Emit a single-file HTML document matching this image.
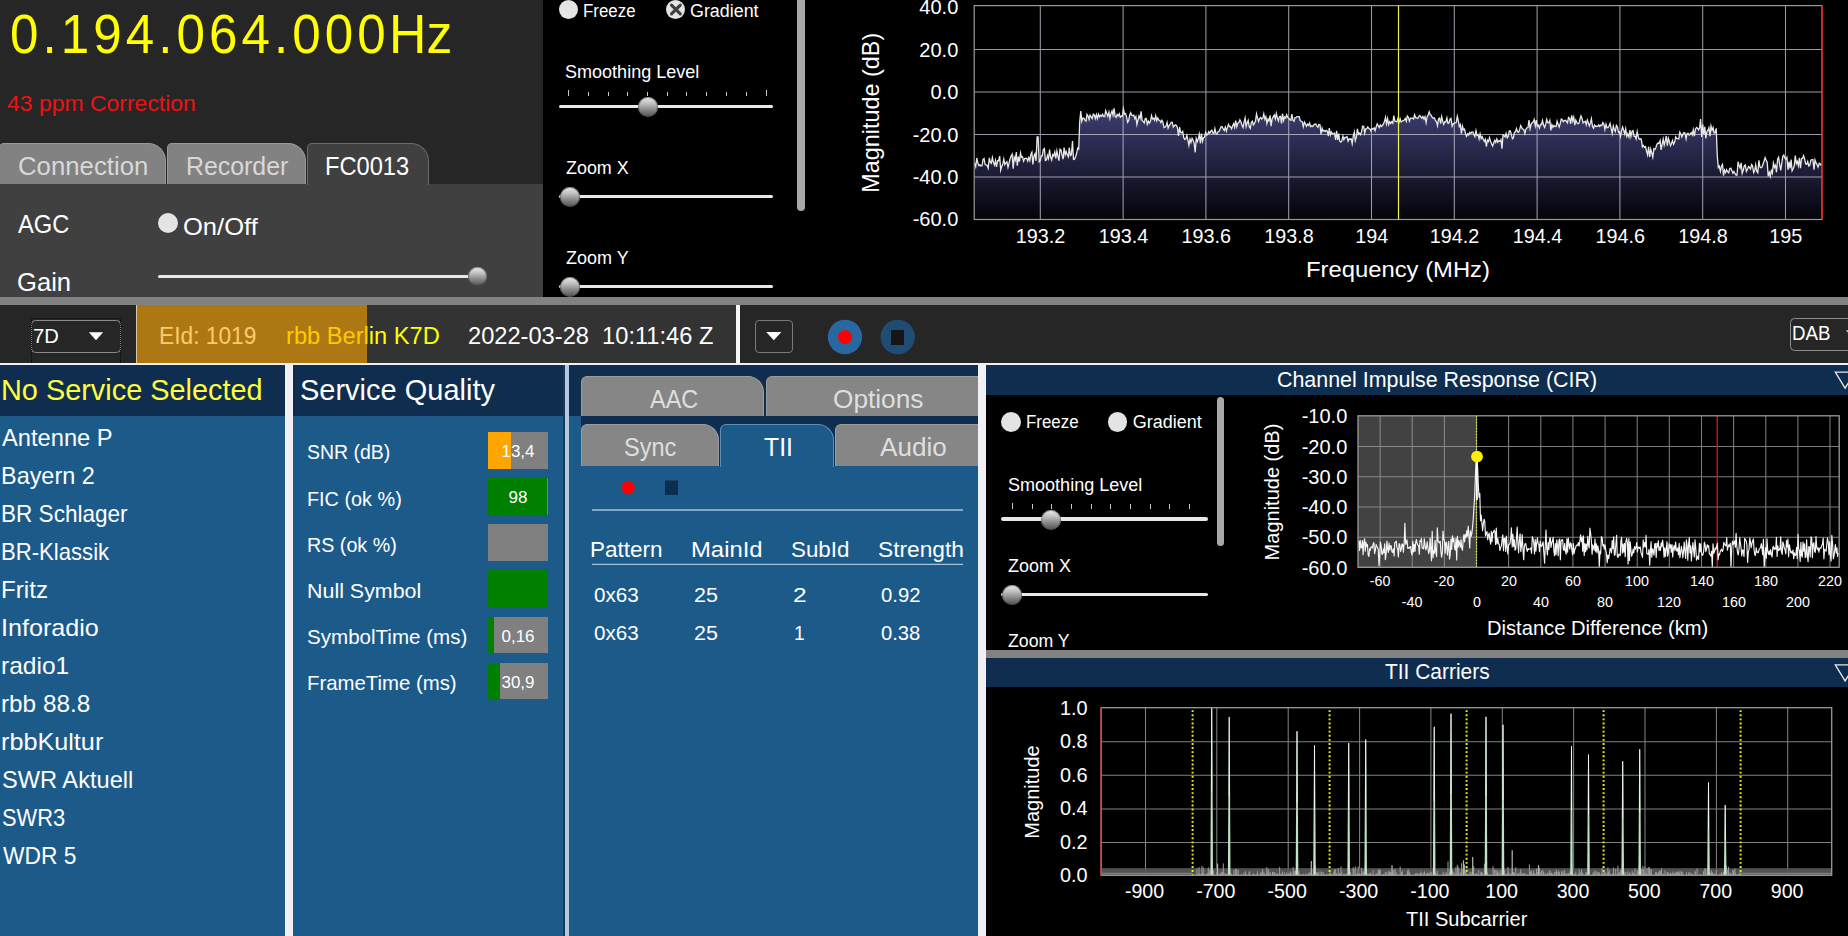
<!DOCTYPE html>
<html><head><meta charset="utf-8"><title>DAB</title><style>
html,body{margin:0;padding:0;}
body{width:1848px;height:936px;overflow:hidden;background:#000;position:relative;
 font-family:"Liberation Sans",sans-serif;color:#fff;}
div,span{position:absolute;box-sizing:border-box;white-space:nowrap;}
.t{line-height:1;transform-origin:0 0;}
svg{position:absolute;left:0;top:0;overflow:visible;}
.thumb{border-radius:50%;background:linear-gradient(to bottom,#ececec 0%,#c4c4c4 30%,#8c8c8c 62%,#4e4e4e 100%);box-shadow:inset 0 0 0 1px rgba(70,70,70,0.55);}
.radio{border-radius:50%;background:#e4e4e4;}
.track{background:#e8e8e8;border-radius:2px;}
.tab{background:#828282;color:#dcdcdc;border:1px solid #9a9a9a;border-bottom:none;border-radius:5px 18px 0 0;}
</style></head><body>
<div style="left:0px;top:0px;width:543px;height:297px;background:#262626;"></div>
<div class="t f1" style="left:9.8px;top:7.45px;font-size:55px;color:#ffff00;transform:scaleX(0.93);letter-spacing:4.35px;">0.194.064.000</div>
<div class="t" style="left:389.46px;top:7.24px;font-size:55px;color:#ffff00;transform:scaleX(0.9414);">Hz</div>
<div class="t" style="left:7.49px;top:93.05px;font-size:22.5px;color:#ee1111;transform:scaleX(1.0205);">43 ppm Correction</div>
<div style="left:0px;top:184px;width:543px;height:113px;background:#404040;"></div>
<div class="tab" style="left:-1px;top:143px;width:167px;height:41px;"></div>
<div class="tab" style="left:167px;top:143px;width:139px;height:41px;"></div>
<div class="tab" style="left:307px;top:143px;width:122px;height:42px;background:#404040;border-color:#6a6a6a;"></div>
<div class="t" style="left:18.21px;top:154.14px;font-size:25px;color:#d8d8d8;transform:scaleX(1.0303);">Connection</div>
<div class="t" style="left:185.51px;top:154.14px;font-size:25px;color:#d8d8d8;transform:scaleX(0.9950);">Recorder</div>
<div class="t" style="left:325.11px;top:154.14px;font-size:25px;color:#ffffff;transform:scaleX(0.9467);">FC0013</div>
<div class="t" style="left:17.50px;top:211.81px;font-size:25.5px;color:#fff;transform:scaleX(0.9287);">AGC</div>
<div class="radio" style="left:158px;top:213px;width:20px;height:20px;"></div>
<div class="t" style="left:183.10px;top:214.58px;font-size:24px;color:#fff;transform:scaleX(1.0643);">On/Off</div>
<div class="t" style="left:17.05px;top:269.61px;font-size:25.5px;color:#fff;transform:scaleX(1.0039);">Gain</div>
<div class="track" style="left:158px;top:275px;width:318px;height:3px;"></div>
<div class="thumb" style="left:468px;top:267px;width:19px;height:19px;"></div>
<div class="radio" style="left:559px;top:-0.2px;width:19px;height:19px;"></div>
<div class="t" style="left:583.21px;top:1.96px;font-size:18px;color:#fff;transform:scaleX(0.9374);">Freeze</div>
<div class="radio" style="left:666px;top:-0.2px;width:19px;height:19px;"></div>
<svg width="1848" height="936"><path d="M671.5 5.1 L680.3 13.9 M680.3 5.1 L671.5 13.9" stroke="#404040" stroke-width="3.1" stroke-linecap="round" fill="none"/></svg>
<div class="t" style="left:690.33px;top:1.96px;font-size:18px;color:#fff;transform:scaleX(0.9926);">Gradient</div>
<div class="t" style="left:565.45px;top:62.96px;font-size:18px;color:#fff;transform:scaleX(1.0019);">Smoothing Level</div>
<div style="left:568px;top:90px;width:1px;height:6px;background:#c8c8c8;"></div>
<div style="left:588px;top:92px;width:1px;height:4px;background:#c8c8c8;"></div>
<div style="left:608px;top:92px;width:1px;height:4px;background:#c8c8c8;"></div>
<div style="left:627px;top:92px;width:1px;height:4px;background:#c8c8c8;"></div>
<div style="left:647px;top:92px;width:1px;height:4px;background:#c8c8c8;"></div>
<div style="left:667px;top:92px;width:1px;height:4px;background:#c8c8c8;"></div>
<div style="left:686px;top:92px;width:1px;height:4px;background:#c8c8c8;"></div>
<div style="left:706px;top:92px;width:1px;height:4px;background:#c8c8c8;"></div>
<div style="left:726px;top:92px;width:1px;height:4px;background:#c8c8c8;"></div>
<div style="left:746px;top:92px;width:1px;height:4px;background:#c8c8c8;"></div>
<div style="left:766px;top:90px;width:1px;height:6px;background:#c8c8c8;"></div>
<div class="track" style="left:559px;top:105.3px;width:214px;height:3.2px;"></div>
<div class="thumb" style="left:637.5px;top:96.7px;width:20px;height:20.3px;"></div>
<div class="t" style="left:565.70px;top:158.66px;font-size:18px;color:#fff;transform:scaleX(0.9948);">Zoom X</div>
<div class="track" style="left:559px;top:195.3px;width:214px;height:3.2px;"></div>
<div class="thumb" style="left:559.6px;top:187px;width:20px;height:20px;"></div>
<div class="t" style="left:565.70px;top:248.66px;font-size:18px;color:#fff;transform:scaleX(0.9988);">Zoom Y</div>
<div class="track" style="left:559px;top:285.3px;width:214px;height:3.2px;"></div>
<div class="thumb" style="left:559.6px;top:277px;width:20px;height:20px;"></div>
<div style="left:797px;top:0px;width:7.5px;height:211px;background:#a8a8a8;border-radius:0 0 4px 4px;"></div>
<svg width="1848" height="936"><defs><linearGradient id="sg" x1="0" y1="100" x2="0" y2="219.5" gradientUnits="userSpaceOnUse"><stop offset="0" stop-color="#42427a"/><stop offset="1" stop-color="#04040a"/></linearGradient></defs><path d="M974.7 163.3 L975.7 166.6 L976.8 158.0 L977.8 163.1 L978.9 165.7 L979.9 164.7 L980.9 166.0 L982.0 165.8 L983.0 159.6 L984.1 158.5 L985.1 164.6 L986.1 164.9 L987.2 165.5 L988.2 168.2 L989.3 157.8 L990.3 162.2 L991.3 163.4 L992.4 157.6 L993.4 162.4 L994.5 165.0 L995.5 160.5 L996.5 166.9 L997.6 160.6 L998.6 160.7 L999.7 156.1 L1000.7 170.1 L1001.7 166.4 L1002.8 164.0 L1003.8 159.0 L1004.9 164.6 L1005.9 162.8 L1006.9 161.7 L1008.0 167.3 L1009.0 163.5 L1010.1 158.5 L1011.1 156.1 L1012.1 154.3 L1013.2 168.8 L1014.2 157.0 L1015.3 160.1 L1016.3 152.0 L1017.3 165.6 L1018.4 156.7 L1019.4 161.6 L1020.5 152.9 L1021.5 157.2 L1022.5 156.9 L1023.6 161.2 L1024.6 158.6 L1025.7 158.3 L1026.7 158.2 L1027.7 161.0 L1028.8 157.5 L1029.8 160.5 L1030.9 154.2 L1031.9 152.2 L1032.9 164.4 L1034.0 156.0 L1035.0 153.8 L1036.1 160.8 L1037.1 137.0 L1038.1 137.0 L1039.2 161.9 L1040.2 160.7 L1041.3 155.9 L1042.3 155.9 L1043.3 149.6 L1044.4 148.6 L1045.4 160.5 L1046.5 159.9 L1047.5 155.5 L1048.5 158.6 L1049.6 149.5 L1050.6 157.0 L1051.7 160.0 L1052.7 154.6 L1053.7 156.0 L1054.8 152.0 L1055.8 158.5 L1056.9 151.0 L1057.9 156.2 L1058.9 160.6 L1060.0 149.2 L1061.0 149.9 L1062.1 155.2 L1063.1 159.2 L1064.1 147.5 L1065.2 154.8 L1066.2 151.6 L1067.3 154.8 L1068.3 156.7 L1069.3 147.5 L1070.4 155.7 L1071.4 154.8 L1072.5 141.0 L1073.5 159.4 L1074.5 159.1 L1075.6 156.7 L1076.6 153.3 L1077.7 148.1 L1078.7 149.1 L1079.7 121.7 L1080.8 111.1 L1081.8 121.2 L1082.9 118.1 L1083.9 118.1 L1084.9 120.2 L1086.0 121.2 L1087.0 114.4 L1088.1 116.1 L1089.1 119.5 L1090.1 115.2 L1091.2 116.9 L1092.2 118.5 L1093.3 114.2 L1094.3 115.0 L1095.3 118.5 L1096.4 114.6 L1097.4 118.6 L1098.5 114.2 L1099.5 116.8 L1100.5 115.3 L1101.6 116.3 L1102.6 114.3 L1103.7 116.7 L1104.7 116.7 L1105.7 110.7 L1106.8 113.6 L1107.8 116.3 L1108.9 112.2 L1109.9 118.4 L1110.9 113.9 L1112.0 110.9 L1113.0 115.1 L1114.1 108.3 L1115.1 116.3 L1116.1 117.5 L1117.2 114.4 L1118.2 116.0 L1119.3 113.7 L1120.3 117.1 L1121.3 116.0 L1122.4 116.4 L1123.4 108.8 L1124.5 114.1 L1125.5 113.6 L1126.5 116.4 L1127.6 122.3 L1128.6 120.8 L1129.7 114.9 L1130.7 112.7 L1131.7 115.2 L1132.8 115.6 L1133.8 115.2 L1134.9 118.7 L1135.9 116.5 L1136.9 124.4 L1138.0 120.0 L1139.0 115.8 L1140.1 118.4 L1141.1 111.3 L1142.1 120.4 L1143.2 121.5 L1144.2 123.0 L1145.3 118.6 L1146.3 118.4 L1147.3 124.3 L1148.4 121.1 L1149.4 123.1 L1150.5 121.0 L1151.5 115.5 L1152.5 119.0 L1153.6 118.3 L1154.6 120.3 L1155.7 115.7 L1156.7 120.6 L1157.7 118.0 L1158.8 120.1 L1159.8 120.3 L1160.9 122.7 L1161.9 120.3 L1162.9 122.1 L1164.0 127.7 L1165.0 127.3 L1166.1 126.0 L1167.1 122.4 L1168.1 128.2 L1169.2 125.5 L1170.2 124.2 L1171.3 122.2 L1172.3 122.4 L1173.3 127.1 L1174.4 125.8 L1175.4 124.9 L1176.5 125.5 L1177.5 128.1 L1178.5 136.0 L1179.6 127.1 L1180.6 132.4 L1181.7 132.7 L1182.7 131.4 L1183.7 137.7 L1184.8 139.4 L1185.8 139.0 L1186.9 135.3 L1187.9 140.1 L1188.9 145.3 L1190.0 139.1 L1191.0 142.3 L1192.1 138.2 L1193.1 140.2 L1194.1 143.0 L1195.2 152.5 L1196.2 138.6 L1197.3 141.5 L1198.3 138.7 L1199.3 134.2 L1200.4 143.3 L1201.4 133.6 L1202.5 141.3 L1203.5 137.8 L1204.5 137.1 L1205.6 132.4 L1206.6 135.2 L1207.7 134.3 L1208.7 131.6 L1209.7 133.2 L1210.8 131.1 L1211.8 130.1 L1212.9 133.1 L1213.9 133.3 L1214.9 128.6 L1216.0 133.9 L1217.0 134.1 L1218.1 131.5 L1219.1 131.3 L1220.1 128.9 L1221.2 126.5 L1222.2 126.7 L1223.3 129.2 L1224.3 130.5 L1225.3 127.1 L1226.4 131.1 L1227.4 127.6 L1228.5 124.4 L1229.5 126.8 L1230.5 126.5 L1231.6 128.9 L1232.6 126.1 L1233.7 123.7 L1234.7 127.4 L1235.7 120.5 L1236.8 126.7 L1237.8 123.2 L1238.9 122.6 L1239.9 119.9 L1240.9 121.7 L1242.0 125.3 L1243.0 127.5 L1244.1 122.1 L1245.1 118.0 L1246.1 126.5 L1247.2 122.7 L1248.2 120.3 L1249.3 126.9 L1250.3 128.4 L1251.3 122.5 L1252.4 121.1 L1253.4 124.9 L1254.5 123.1 L1255.5 121.0 L1256.5 113.9 L1257.6 118.4 L1258.6 121.5 L1259.7 118.3 L1260.7 117.4 L1261.7 119.0 L1262.8 118.2 L1263.8 113.9 L1264.9 119.3 L1265.9 116.7 L1266.9 123.5 L1268.0 119.1 L1269.0 120.9 L1270.1 115.3 L1271.1 126.2 L1272.1 118.9 L1273.2 116.9 L1274.2 115.0 L1275.3 118.9 L1276.3 113.5 L1277.3 117.7 L1278.4 120.9 L1279.4 116.7 L1280.5 116.3 L1281.5 123.4 L1282.5 113.7 L1283.6 120.5 L1284.6 117.0 L1285.7 118.1 L1286.7 114.7 L1287.7 117.4 L1288.8 118.3 L1289.8 119.7 L1290.9 120.2 L1291.9 114.1 L1292.9 120.2 L1294.0 121.3 L1295.0 117.5 L1296.1 117.3 L1297.1 116.7 L1298.1 116.7 L1299.2 116.7 L1300.2 120.5 L1301.3 121.3 L1302.3 121.9 L1303.3 126.8 L1304.4 122.0 L1305.4 123.8 L1306.5 126.3 L1307.5 124.2 L1308.5 125.4 L1309.6 123.1 L1310.6 126.6 L1311.7 125.8 L1312.7 126.6 L1313.7 125.1 L1314.8 124.2 L1315.8 124.0 L1316.9 126.1 L1317.9 127.2 L1318.9 124.5 L1320.0 124.8 L1321.0 134.3 L1322.1 128.1 L1323.1 131.1 L1324.1 130.4 L1325.2 131.5 L1326.2 130.4 L1327.3 131.2 L1328.3 136.1 L1329.3 128.0 L1330.4 134.9 L1331.4 132.0 L1332.5 133.8 L1333.5 133.7 L1334.5 133.2 L1335.6 139.9 L1336.6 130.8 L1337.7 139.8 L1338.7 133.6 L1339.7 141.2 L1340.8 142.1 L1341.8 140.9 L1342.9 136.2 L1343.9 139.7 L1344.9 137.4 L1346.0 137.3 L1347.0 136.6 L1348.1 141.2 L1349.1 138.9 L1350.1 139.2 L1351.2 138.8 L1352.2 143.7 L1353.3 136.0 L1354.3 132.1 L1355.3 140.5 L1356.4 136.9 L1357.4 128.8 L1358.5 134.3 L1359.5 133.1 L1360.5 134.7 L1361.6 131.6 L1362.6 126.3 L1363.7 126.4 L1364.7 133.3 L1365.7 128.9 L1366.8 128.7 L1367.8 127.0 L1368.9 128.7 L1369.9 128.8 L1370.9 131.0 L1372.0 128.6 L1373.0 129.1 L1374.1 127.8 L1375.1 130.8 L1376.1 127.1 L1377.2 123.8 L1378.2 125.7 L1379.3 127.5 L1380.3 124.9 L1381.3 126.5 L1382.4 125.6 L1383.4 123.9 L1384.5 121.6 L1385.5 117.4 L1386.5 123.9 L1387.6 118.5 L1388.6 124.6 L1389.7 121.7 L1390.7 123.4 L1391.7 121.7 L1392.8 123.3 L1393.8 115.6 L1394.9 121.2 L1395.9 121.5 L1396.9 121.9 L1398.0 118.2 L1399.0 122.5 L1400.1 118.8 L1401.1 121.9 L1402.1 121.2 L1403.2 120.7 L1404.2 120.1 L1405.3 118.4 L1406.3 121.3 L1407.3 116.0 L1408.4 117.3 L1409.4 121.1 L1410.5 118.1 L1411.5 118.1 L1412.5 118.1 L1413.6 119.0 L1414.6 114.8 L1415.7 117.7 L1416.7 117.8 L1417.7 118.3 L1418.8 116.4 L1419.8 115.4 L1420.9 117.0 L1421.9 118.3 L1422.9 116.4 L1424.0 119.0 L1425.0 116.7 L1426.1 122.8 L1427.1 116.8 L1428.1 115.0 L1429.2 111.8 L1430.2 114.8 L1431.3 115.2 L1432.3 117.5 L1433.3 118.3 L1434.4 117.8 L1435.4 120.5 L1436.5 121.7 L1437.5 125.6 L1438.5 118.8 L1439.6 118.1 L1440.6 123.7 L1441.7 116.7 L1442.7 121.2 L1443.7 124.3 L1444.8 121.7 L1445.8 121.9 L1446.9 117.9 L1447.9 123.3 L1448.9 123.1 L1450.0 119.2 L1451.0 118.5 L1452.1 126.2 L1453.1 124.0 L1454.1 123.2 L1455.2 123.0 L1456.2 122.5 L1457.3 116.3 L1458.3 120.7 L1459.3 126.5 L1460.4 124.6 L1461.4 133.6 L1462.5 126.2 L1463.5 129.8 L1464.5 129.1 L1465.6 133.7 L1466.6 136.3 L1467.7 133.8 L1468.7 135.0 L1469.7 132.4 L1470.8 133.5 L1471.8 131.9 L1472.9 132.0 L1473.9 134.6 L1474.9 136.6 L1476.0 130.6 L1477.0 135.4 L1478.1 134.6 L1479.1 138.9 L1480.1 133.8 L1481.2 138.6 L1482.2 136.7 L1483.3 139.2 L1484.3 141.4 L1485.3 139.2 L1486.4 146.6 L1487.4 140.1 L1488.5 141.6 L1489.5 137.7 L1490.5 140.9 L1491.6 143.8 L1492.6 146.0 L1493.7 143.0 L1494.7 140.3 L1495.7 142.4 L1496.8 138.9 L1497.8 142.3 L1498.9 140.6 L1499.9 141.3 L1500.9 139.5 L1502.0 148.6 L1503.0 135.0 L1504.1 135.8 L1505.1 136.9 L1506.1 133.4 L1507.2 137.7 L1508.2 136.4 L1509.3 131.0 L1510.3 131.0 L1511.3 133.9 L1512.4 138.8 L1513.4 137.9 L1514.5 132.2 L1515.5 131.8 L1516.5 128.6 L1517.6 131.9 L1518.6 132.4 L1519.7 129.4 L1520.7 125.6 L1521.7 127.6 L1522.8 129.2 L1523.8 129.4 L1524.9 133.6 L1525.9 129.2 L1526.9 127.9 L1528.0 127.5 L1529.0 120.0 L1530.1 128.7 L1531.1 124.4 L1532.1 122.7 L1533.2 122.0 L1534.2 119.4 L1535.3 125.8 L1536.3 120.0 L1537.3 126.1 L1538.4 125.1 L1539.4 128.1 L1540.5 124.4 L1541.5 124.5 L1542.5 120.6 L1543.6 125.3 L1544.6 127.5 L1545.7 124.1 L1546.7 119.4 L1547.7 122.7 L1548.8 122.8 L1549.8 120.5 L1550.9 130.4 L1551.9 124.7 L1552.9 127.3 L1554.0 125.5 L1555.0 126.3 L1556.1 126.5 L1557.1 121.2 L1558.1 124.2 L1559.2 126.9 L1560.2 123.4 L1561.3 119.0 L1562.3 119.6 L1563.3 121.6 L1564.4 120.6 L1565.4 120.3 L1566.5 121.3 L1567.5 122.8 L1568.5 117.4 L1569.6 118.3 L1570.6 123.8 L1571.7 115.3 L1572.7 120.9 L1573.7 117.3 L1574.8 125.2 L1575.8 120.1 L1576.9 122.6 L1577.9 123.8 L1578.9 123.3 L1580.0 119.0 L1581.0 115.9 L1582.1 118.6 L1583.1 123.0 L1584.1 121.9 L1585.2 121.2 L1586.2 124.7 L1587.3 120.0 L1588.3 122.7 L1589.3 125.9 L1590.4 122.9 L1591.4 118.7 L1592.5 126.5 L1593.5 128.2 L1594.5 125.1 L1595.6 126.5 L1596.6 126.2 L1597.7 126.3 L1598.7 124.9 L1599.7 126.4 L1600.8 125.0 L1601.8 125.5 L1602.9 122.5 L1603.9 124.2 L1604.9 129.4 L1606.0 124.2 L1607.0 127.7 L1608.1 127.4 L1609.1 125.8 L1610.1 123.4 L1611.2 128.6 L1612.2 133.4 L1613.3 126.1 L1614.3 129.5 L1615.3 131.5 L1616.4 125.3 L1617.4 126.7 L1618.5 132.4 L1619.5 131.9 L1620.5 136.5 L1621.6 130.4 L1622.6 127.0 L1623.7 130.4 L1624.7 134.0 L1625.7 128.9 L1626.8 136.3 L1627.8 133.9 L1628.9 137.1 L1629.9 130.2 L1630.9 136.5 L1632.0 131.4 L1633.0 130.6 L1634.1 136.4 L1635.1 136.3 L1636.1 138.9 L1637.2 131.6 L1638.2 136.5 L1639.3 139.4 L1640.3 138.8 L1641.3 139.3 L1642.4 146.9 L1643.4 145.4 L1644.5 147.3 L1645.5 146.6 L1646.5 151.1 L1647.6 155.0 L1648.6 146.7 L1649.7 157.0 L1650.7 149.0 L1651.7 152.7 L1652.8 157.1 L1653.8 148.8 L1654.9 149.6 L1655.9 147.5 L1656.9 144.3 L1658.0 143.0 L1659.0 143.2 L1660.1 140.6 L1661.1 150.0 L1662.1 144.4 L1663.2 139.1 L1664.2 145.0 L1665.3 140.7 L1666.3 136.0 L1667.3 145.6 L1668.4 138.4 L1669.4 141.6 L1670.5 145.7 L1671.5 143.5 L1672.5 140.5 L1673.6 144.2 L1674.6 142.2 L1675.7 136.9 L1676.7 138.4 L1677.7 138.6 L1678.8 138.9 L1679.8 132.1 L1680.9 134.0 L1681.9 136.9 L1682.9 134.2 L1684.0 132.5 L1685.0 133.1 L1686.1 139.0 L1687.1 133.5 L1688.1 133.3 L1689.2 135.1 L1690.2 133.8 L1691.3 132.6 L1692.3 134.9 L1693.3 129.8 L1694.4 136.1 L1695.4 129.2 L1696.5 127.4 L1697.5 128.3 L1698.5 129.8 L1699.6 127.7 L1700.6 119.1 L1701.7 137.0 L1702.7 124.2 L1703.7 134.3 L1704.8 126.9 L1705.8 138.4 L1706.9 131.6 L1707.9 130.5 L1708.9 127.8 L1710.0 136.1 L1711.0 125.9 L1712.1 130.2 L1713.1 127.6 L1714.1 132.8 L1715.2 132.4 L1716.2 128.3 L1717.3 156.1 L1718.3 167.5 L1719.3 166.1 L1720.4 171.3 L1721.4 166.4 L1722.5 164.4 L1723.5 175.6 L1724.5 170.1 L1725.6 172.6 L1726.6 169.6 L1727.7 171.7 L1728.7 172.9 L1729.7 168.7 L1730.8 168.2 L1731.8 170.6 L1732.9 173.3 L1733.9 171.4 L1734.9 173.5 L1736.0 175.0 L1737.0 175.0 L1738.1 161.7 L1739.1 165.6 L1740.1 168.0 L1741.2 162.8 L1742.2 173.3 L1743.3 170.0 L1744.3 165.8 L1745.3 165.0 L1746.4 171.5 L1747.4 169.6 L1748.5 166.6 L1749.5 167.3 L1750.5 169.0 L1751.6 164.6 L1752.6 166.1 L1753.7 172.6 L1754.7 170.6 L1755.7 164.9 L1756.8 171.4 L1757.8 172.7 L1758.9 160.3 L1759.9 166.9 L1760.9 167.8 L1762.0 167.1 L1763.0 164.3 L1764.1 161.0 L1765.1 157.7 L1766.1 160.1 L1767.2 162.2 L1768.2 176.4 L1769.3 172.3 L1770.3 176.4 L1771.3 170.5 L1772.4 173.2 L1773.4 163.1 L1774.5 167.4 L1775.5 165.2 L1776.5 172.3 L1777.6 159.1 L1778.6 157.2 L1779.7 164.6 L1780.7 170.5 L1781.7 163.8 L1782.8 156.2 L1783.8 155.0 L1784.9 158.1 L1785.9 159.1 L1786.9 157.4 L1788.0 169.8 L1789.0 161.7 L1790.1 168.3 L1791.1 159.6 L1792.1 170.7 L1793.2 168.7 L1794.2 165.8 L1795.3 155.6 L1796.3 163.6 L1797.3 161.3 L1798.4 165.8 L1799.4 157.9 L1800.5 168.3 L1801.5 158.5 L1802.5 158.4 L1803.6 155.7 L1804.6 158.9 L1805.7 164.0 L1806.7 164.2 L1807.7 161.5 L1808.8 166.0 L1809.8 165.1 L1810.9 160.1 L1811.9 159.6 L1812.9 159.7 L1814.0 169.7 L1815.0 159.9 L1816.1 162.9 L1817.1 164.8 L1818.1 167.1 L1819.2 163.3 L1820.2 163.6 L1821.3 165.7 L1822 219.5 L974.2 219.5 Z" fill="url(#sg)"/><path d="M974.2 49.5 H1822 M974.2 92.0 H1822 M974.2 134.5 H1822 M974.2 177.0 H1822 M1040.3 5.6 V219.5 M1123.1 5.6 V219.5 M1205.9 5.6 V219.5 M1288.7 5.6 V219.5 M1371.5 5.6 V219.5 M1454.3 5.6 V219.5 M1537.1 5.6 V219.5 M1619.9 5.6 V219.5 M1702.7 5.6 V219.5 M1785.5 5.6 V219.5" stroke="#c4c4d6" stroke-opacity="0.78" stroke-width="1.05" fill="none"/><path d="M974.7 163.3 L975.7 166.6 L976.8 158.0 L977.8 163.1 L978.9 165.7 L979.9 164.7 L980.9 166.0 L982.0 165.8 L983.0 159.6 L984.1 158.5 L985.1 164.6 L986.1 164.9 L987.2 165.5 L988.2 168.2 L989.3 157.8 L990.3 162.2 L991.3 163.4 L992.4 157.6 L993.4 162.4 L994.5 165.0 L995.5 160.5 L996.5 166.9 L997.6 160.6 L998.6 160.7 L999.7 156.1 L1000.7 170.1 L1001.7 166.4 L1002.8 164.0 L1003.8 159.0 L1004.9 164.6 L1005.9 162.8 L1006.9 161.7 L1008.0 167.3 L1009.0 163.5 L1010.1 158.5 L1011.1 156.1 L1012.1 154.3 L1013.2 168.8 L1014.2 157.0 L1015.3 160.1 L1016.3 152.0 L1017.3 165.6 L1018.4 156.7 L1019.4 161.6 L1020.5 152.9 L1021.5 157.2 L1022.5 156.9 L1023.6 161.2 L1024.6 158.6 L1025.7 158.3 L1026.7 158.2 L1027.7 161.0 L1028.8 157.5 L1029.8 160.5 L1030.9 154.2 L1031.9 152.2 L1032.9 164.4 L1034.0 156.0 L1035.0 153.8 L1036.1 160.8 L1037.1 137.0 L1038.1 137.0 L1039.2 161.9 L1040.2 160.7 L1041.3 155.9 L1042.3 155.9 L1043.3 149.6 L1044.4 148.6 L1045.4 160.5 L1046.5 159.9 L1047.5 155.5 L1048.5 158.6 L1049.6 149.5 L1050.6 157.0 L1051.7 160.0 L1052.7 154.6 L1053.7 156.0 L1054.8 152.0 L1055.8 158.5 L1056.9 151.0 L1057.9 156.2 L1058.9 160.6 L1060.0 149.2 L1061.0 149.9 L1062.1 155.2 L1063.1 159.2 L1064.1 147.5 L1065.2 154.8 L1066.2 151.6 L1067.3 154.8 L1068.3 156.7 L1069.3 147.5 L1070.4 155.7 L1071.4 154.8 L1072.5 141.0 L1073.5 159.4 L1074.5 159.1 L1075.6 156.7 L1076.6 153.3 L1077.7 148.1 L1078.7 149.1 L1079.7 121.7 L1080.8 111.1 L1081.8 121.2 L1082.9 118.1 L1083.9 118.1 L1084.9 120.2 L1086.0 121.2 L1087.0 114.4 L1088.1 116.1 L1089.1 119.5 L1090.1 115.2 L1091.2 116.9 L1092.2 118.5 L1093.3 114.2 L1094.3 115.0 L1095.3 118.5 L1096.4 114.6 L1097.4 118.6 L1098.5 114.2 L1099.5 116.8 L1100.5 115.3 L1101.6 116.3 L1102.6 114.3 L1103.7 116.7 L1104.7 116.7 L1105.7 110.7 L1106.8 113.6 L1107.8 116.3 L1108.9 112.2 L1109.9 118.4 L1110.9 113.9 L1112.0 110.9 L1113.0 115.1 L1114.1 108.3 L1115.1 116.3 L1116.1 117.5 L1117.2 114.4 L1118.2 116.0 L1119.3 113.7 L1120.3 117.1 L1121.3 116.0 L1122.4 116.4 L1123.4 108.8 L1124.5 114.1 L1125.5 113.6 L1126.5 116.4 L1127.6 122.3 L1128.6 120.8 L1129.7 114.9 L1130.7 112.7 L1131.7 115.2 L1132.8 115.6 L1133.8 115.2 L1134.9 118.7 L1135.9 116.5 L1136.9 124.4 L1138.0 120.0 L1139.0 115.8 L1140.1 118.4 L1141.1 111.3 L1142.1 120.4 L1143.2 121.5 L1144.2 123.0 L1145.3 118.6 L1146.3 118.4 L1147.3 124.3 L1148.4 121.1 L1149.4 123.1 L1150.5 121.0 L1151.5 115.5 L1152.5 119.0 L1153.6 118.3 L1154.6 120.3 L1155.7 115.7 L1156.7 120.6 L1157.7 118.0 L1158.8 120.1 L1159.8 120.3 L1160.9 122.7 L1161.9 120.3 L1162.9 122.1 L1164.0 127.7 L1165.0 127.3 L1166.1 126.0 L1167.1 122.4 L1168.1 128.2 L1169.2 125.5 L1170.2 124.2 L1171.3 122.2 L1172.3 122.4 L1173.3 127.1 L1174.4 125.8 L1175.4 124.9 L1176.5 125.5 L1177.5 128.1 L1178.5 136.0 L1179.6 127.1 L1180.6 132.4 L1181.7 132.7 L1182.7 131.4 L1183.7 137.7 L1184.8 139.4 L1185.8 139.0 L1186.9 135.3 L1187.9 140.1 L1188.9 145.3 L1190.0 139.1 L1191.0 142.3 L1192.1 138.2 L1193.1 140.2 L1194.1 143.0 L1195.2 152.5 L1196.2 138.6 L1197.3 141.5 L1198.3 138.7 L1199.3 134.2 L1200.4 143.3 L1201.4 133.6 L1202.5 141.3 L1203.5 137.8 L1204.5 137.1 L1205.6 132.4 L1206.6 135.2 L1207.7 134.3 L1208.7 131.6 L1209.7 133.2 L1210.8 131.1 L1211.8 130.1 L1212.9 133.1 L1213.9 133.3 L1214.9 128.6 L1216.0 133.9 L1217.0 134.1 L1218.1 131.5 L1219.1 131.3 L1220.1 128.9 L1221.2 126.5 L1222.2 126.7 L1223.3 129.2 L1224.3 130.5 L1225.3 127.1 L1226.4 131.1 L1227.4 127.6 L1228.5 124.4 L1229.5 126.8 L1230.5 126.5 L1231.6 128.9 L1232.6 126.1 L1233.7 123.7 L1234.7 127.4 L1235.7 120.5 L1236.8 126.7 L1237.8 123.2 L1238.9 122.6 L1239.9 119.9 L1240.9 121.7 L1242.0 125.3 L1243.0 127.5 L1244.1 122.1 L1245.1 118.0 L1246.1 126.5 L1247.2 122.7 L1248.2 120.3 L1249.3 126.9 L1250.3 128.4 L1251.3 122.5 L1252.4 121.1 L1253.4 124.9 L1254.5 123.1 L1255.5 121.0 L1256.5 113.9 L1257.6 118.4 L1258.6 121.5 L1259.7 118.3 L1260.7 117.4 L1261.7 119.0 L1262.8 118.2 L1263.8 113.9 L1264.9 119.3 L1265.9 116.7 L1266.9 123.5 L1268.0 119.1 L1269.0 120.9 L1270.1 115.3 L1271.1 126.2 L1272.1 118.9 L1273.2 116.9 L1274.2 115.0 L1275.3 118.9 L1276.3 113.5 L1277.3 117.7 L1278.4 120.9 L1279.4 116.7 L1280.5 116.3 L1281.5 123.4 L1282.5 113.7 L1283.6 120.5 L1284.6 117.0 L1285.7 118.1 L1286.7 114.7 L1287.7 117.4 L1288.8 118.3 L1289.8 119.7 L1290.9 120.2 L1291.9 114.1 L1292.9 120.2 L1294.0 121.3 L1295.0 117.5 L1296.1 117.3 L1297.1 116.7 L1298.1 116.7 L1299.2 116.7 L1300.2 120.5 L1301.3 121.3 L1302.3 121.9 L1303.3 126.8 L1304.4 122.0 L1305.4 123.8 L1306.5 126.3 L1307.5 124.2 L1308.5 125.4 L1309.6 123.1 L1310.6 126.6 L1311.7 125.8 L1312.7 126.6 L1313.7 125.1 L1314.8 124.2 L1315.8 124.0 L1316.9 126.1 L1317.9 127.2 L1318.9 124.5 L1320.0 124.8 L1321.0 134.3 L1322.1 128.1 L1323.1 131.1 L1324.1 130.4 L1325.2 131.5 L1326.2 130.4 L1327.3 131.2 L1328.3 136.1 L1329.3 128.0 L1330.4 134.9 L1331.4 132.0 L1332.5 133.8 L1333.5 133.7 L1334.5 133.2 L1335.6 139.9 L1336.6 130.8 L1337.7 139.8 L1338.7 133.6 L1339.7 141.2 L1340.8 142.1 L1341.8 140.9 L1342.9 136.2 L1343.9 139.7 L1344.9 137.4 L1346.0 137.3 L1347.0 136.6 L1348.1 141.2 L1349.1 138.9 L1350.1 139.2 L1351.2 138.8 L1352.2 143.7 L1353.3 136.0 L1354.3 132.1 L1355.3 140.5 L1356.4 136.9 L1357.4 128.8 L1358.5 134.3 L1359.5 133.1 L1360.5 134.7 L1361.6 131.6 L1362.6 126.3 L1363.7 126.4 L1364.7 133.3 L1365.7 128.9 L1366.8 128.7 L1367.8 127.0 L1368.9 128.7 L1369.9 128.8 L1370.9 131.0 L1372.0 128.6 L1373.0 129.1 L1374.1 127.8 L1375.1 130.8 L1376.1 127.1 L1377.2 123.8 L1378.2 125.7 L1379.3 127.5 L1380.3 124.9 L1381.3 126.5 L1382.4 125.6 L1383.4 123.9 L1384.5 121.6 L1385.5 117.4 L1386.5 123.9 L1387.6 118.5 L1388.6 124.6 L1389.7 121.7 L1390.7 123.4 L1391.7 121.7 L1392.8 123.3 L1393.8 115.6 L1394.9 121.2 L1395.9 121.5 L1396.9 121.9 L1398.0 118.2 L1399.0 122.5 L1400.1 118.8 L1401.1 121.9 L1402.1 121.2 L1403.2 120.7 L1404.2 120.1 L1405.3 118.4 L1406.3 121.3 L1407.3 116.0 L1408.4 117.3 L1409.4 121.1 L1410.5 118.1 L1411.5 118.1 L1412.5 118.1 L1413.6 119.0 L1414.6 114.8 L1415.7 117.7 L1416.7 117.8 L1417.7 118.3 L1418.8 116.4 L1419.8 115.4 L1420.9 117.0 L1421.9 118.3 L1422.9 116.4 L1424.0 119.0 L1425.0 116.7 L1426.1 122.8 L1427.1 116.8 L1428.1 115.0 L1429.2 111.8 L1430.2 114.8 L1431.3 115.2 L1432.3 117.5 L1433.3 118.3 L1434.4 117.8 L1435.4 120.5 L1436.5 121.7 L1437.5 125.6 L1438.5 118.8 L1439.6 118.1 L1440.6 123.7 L1441.7 116.7 L1442.7 121.2 L1443.7 124.3 L1444.8 121.7 L1445.8 121.9 L1446.9 117.9 L1447.9 123.3 L1448.9 123.1 L1450.0 119.2 L1451.0 118.5 L1452.1 126.2 L1453.1 124.0 L1454.1 123.2 L1455.2 123.0 L1456.2 122.5 L1457.3 116.3 L1458.3 120.7 L1459.3 126.5 L1460.4 124.6 L1461.4 133.6 L1462.5 126.2 L1463.5 129.8 L1464.5 129.1 L1465.6 133.7 L1466.6 136.3 L1467.7 133.8 L1468.7 135.0 L1469.7 132.4 L1470.8 133.5 L1471.8 131.9 L1472.9 132.0 L1473.9 134.6 L1474.9 136.6 L1476.0 130.6 L1477.0 135.4 L1478.1 134.6 L1479.1 138.9 L1480.1 133.8 L1481.2 138.6 L1482.2 136.7 L1483.3 139.2 L1484.3 141.4 L1485.3 139.2 L1486.4 146.6 L1487.4 140.1 L1488.5 141.6 L1489.5 137.7 L1490.5 140.9 L1491.6 143.8 L1492.6 146.0 L1493.7 143.0 L1494.7 140.3 L1495.7 142.4 L1496.8 138.9 L1497.8 142.3 L1498.9 140.6 L1499.9 141.3 L1500.9 139.5 L1502.0 148.6 L1503.0 135.0 L1504.1 135.8 L1505.1 136.9 L1506.1 133.4 L1507.2 137.7 L1508.2 136.4 L1509.3 131.0 L1510.3 131.0 L1511.3 133.9 L1512.4 138.8 L1513.4 137.9 L1514.5 132.2 L1515.5 131.8 L1516.5 128.6 L1517.6 131.9 L1518.6 132.4 L1519.7 129.4 L1520.7 125.6 L1521.7 127.6 L1522.8 129.2 L1523.8 129.4 L1524.9 133.6 L1525.9 129.2 L1526.9 127.9 L1528.0 127.5 L1529.0 120.0 L1530.1 128.7 L1531.1 124.4 L1532.1 122.7 L1533.2 122.0 L1534.2 119.4 L1535.3 125.8 L1536.3 120.0 L1537.3 126.1 L1538.4 125.1 L1539.4 128.1 L1540.5 124.4 L1541.5 124.5 L1542.5 120.6 L1543.6 125.3 L1544.6 127.5 L1545.7 124.1 L1546.7 119.4 L1547.7 122.7 L1548.8 122.8 L1549.8 120.5 L1550.9 130.4 L1551.9 124.7 L1552.9 127.3 L1554.0 125.5 L1555.0 126.3 L1556.1 126.5 L1557.1 121.2 L1558.1 124.2 L1559.2 126.9 L1560.2 123.4 L1561.3 119.0 L1562.3 119.6 L1563.3 121.6 L1564.4 120.6 L1565.4 120.3 L1566.5 121.3 L1567.5 122.8 L1568.5 117.4 L1569.6 118.3 L1570.6 123.8 L1571.7 115.3 L1572.7 120.9 L1573.7 117.3 L1574.8 125.2 L1575.8 120.1 L1576.9 122.6 L1577.9 123.8 L1578.9 123.3 L1580.0 119.0 L1581.0 115.9 L1582.1 118.6 L1583.1 123.0 L1584.1 121.9 L1585.2 121.2 L1586.2 124.7 L1587.3 120.0 L1588.3 122.7 L1589.3 125.9 L1590.4 122.9 L1591.4 118.7 L1592.5 126.5 L1593.5 128.2 L1594.5 125.1 L1595.6 126.5 L1596.6 126.2 L1597.7 126.3 L1598.7 124.9 L1599.7 126.4 L1600.8 125.0 L1601.8 125.5 L1602.9 122.5 L1603.9 124.2 L1604.9 129.4 L1606.0 124.2 L1607.0 127.7 L1608.1 127.4 L1609.1 125.8 L1610.1 123.4 L1611.2 128.6 L1612.2 133.4 L1613.3 126.1 L1614.3 129.5 L1615.3 131.5 L1616.4 125.3 L1617.4 126.7 L1618.5 132.4 L1619.5 131.9 L1620.5 136.5 L1621.6 130.4 L1622.6 127.0 L1623.7 130.4 L1624.7 134.0 L1625.7 128.9 L1626.8 136.3 L1627.8 133.9 L1628.9 137.1 L1629.9 130.2 L1630.9 136.5 L1632.0 131.4 L1633.0 130.6 L1634.1 136.4 L1635.1 136.3 L1636.1 138.9 L1637.2 131.6 L1638.2 136.5 L1639.3 139.4 L1640.3 138.8 L1641.3 139.3 L1642.4 146.9 L1643.4 145.4 L1644.5 147.3 L1645.5 146.6 L1646.5 151.1 L1647.6 155.0 L1648.6 146.7 L1649.7 157.0 L1650.7 149.0 L1651.7 152.7 L1652.8 157.1 L1653.8 148.8 L1654.9 149.6 L1655.9 147.5 L1656.9 144.3 L1658.0 143.0 L1659.0 143.2 L1660.1 140.6 L1661.1 150.0 L1662.1 144.4 L1663.2 139.1 L1664.2 145.0 L1665.3 140.7 L1666.3 136.0 L1667.3 145.6 L1668.4 138.4 L1669.4 141.6 L1670.5 145.7 L1671.5 143.5 L1672.5 140.5 L1673.6 144.2 L1674.6 142.2 L1675.7 136.9 L1676.7 138.4 L1677.7 138.6 L1678.8 138.9 L1679.8 132.1 L1680.9 134.0 L1681.9 136.9 L1682.9 134.2 L1684.0 132.5 L1685.0 133.1 L1686.1 139.0 L1687.1 133.5 L1688.1 133.3 L1689.2 135.1 L1690.2 133.8 L1691.3 132.6 L1692.3 134.9 L1693.3 129.8 L1694.4 136.1 L1695.4 129.2 L1696.5 127.4 L1697.5 128.3 L1698.5 129.8 L1699.6 127.7 L1700.6 119.1 L1701.7 137.0 L1702.7 124.2 L1703.7 134.3 L1704.8 126.9 L1705.8 138.4 L1706.9 131.6 L1707.9 130.5 L1708.9 127.8 L1710.0 136.1 L1711.0 125.9 L1712.1 130.2 L1713.1 127.6 L1714.1 132.8 L1715.2 132.4 L1716.2 128.3 L1717.3 156.1 L1718.3 167.5 L1719.3 166.1 L1720.4 171.3 L1721.4 166.4 L1722.5 164.4 L1723.5 175.6 L1724.5 170.1 L1725.6 172.6 L1726.6 169.6 L1727.7 171.7 L1728.7 172.9 L1729.7 168.7 L1730.8 168.2 L1731.8 170.6 L1732.9 173.3 L1733.9 171.4 L1734.9 173.5 L1736.0 175.0 L1737.0 175.0 L1738.1 161.7 L1739.1 165.6 L1740.1 168.0 L1741.2 162.8 L1742.2 173.3 L1743.3 170.0 L1744.3 165.8 L1745.3 165.0 L1746.4 171.5 L1747.4 169.6 L1748.5 166.6 L1749.5 167.3 L1750.5 169.0 L1751.6 164.6 L1752.6 166.1 L1753.7 172.6 L1754.7 170.6 L1755.7 164.9 L1756.8 171.4 L1757.8 172.7 L1758.9 160.3 L1759.9 166.9 L1760.9 167.8 L1762.0 167.1 L1763.0 164.3 L1764.1 161.0 L1765.1 157.7 L1766.1 160.1 L1767.2 162.2 L1768.2 176.4 L1769.3 172.3 L1770.3 176.4 L1771.3 170.5 L1772.4 173.2 L1773.4 163.1 L1774.5 167.4 L1775.5 165.2 L1776.5 172.3 L1777.6 159.1 L1778.6 157.2 L1779.7 164.6 L1780.7 170.5 L1781.7 163.8 L1782.8 156.2 L1783.8 155.0 L1784.9 158.1 L1785.9 159.1 L1786.9 157.4 L1788.0 169.8 L1789.0 161.7 L1790.1 168.3 L1791.1 159.6 L1792.1 170.7 L1793.2 168.7 L1794.2 165.8 L1795.3 155.6 L1796.3 163.6 L1797.3 161.3 L1798.4 165.8 L1799.4 157.9 L1800.5 168.3 L1801.5 158.5 L1802.5 158.4 L1803.6 155.7 L1804.6 158.9 L1805.7 164.0 L1806.7 164.2 L1807.7 161.5 L1808.8 166.0 L1809.8 165.1 L1810.9 160.1 L1811.9 159.6 L1812.9 159.7 L1814.0 169.7 L1815.0 159.9 L1816.1 162.9 L1817.1 164.8 L1818.1 167.1 L1819.2 163.3 L1820.2 163.6 L1821.3 165.7" stroke="#e8e8e8" stroke-width="1.3" fill="none" stroke-linejoin="miter" stroke-miterlimit="6"/><rect x="974.2" y="5.6" width="847.8" height="213.9" fill="none" stroke="#9a9a9a" stroke-width="1.2"/><path d="M1398.5 5.6 V219.5" stroke="#f4f450" stroke-width="1.2"/><path d="M1822.3 5.6 V219.5" stroke="#c42828" stroke-width="1.4"/></svg>
<div class="t yl1" style="left:858.3px;width:100px;text-align:right;top:-2.7px;font-size:20px;">40.0</div>
<div class="t yl1" style="left:858.3px;width:100px;text-align:right;top:39.8px;font-size:20px;">20.0</div>
<div class="t yl1" style="left:858.3px;width:100px;text-align:right;top:82.3px;font-size:20px;">0.0</div>
<div class="t yl1" style="left:858.3px;width:100px;text-align:right;top:124.8px;font-size:20px;">-20.0</div>
<div class="t yl1" style="left:858.3px;width:100px;text-align:right;top:167.3px;font-size:20px;">-40.0</div>
<div class="t yl1" style="left:858.3px;width:100px;text-align:right;top:209.3px;font-size:20px;">-60.0</div>
<div class="t xl1" style="left:990.6px;width:100px;text-align:center;top:226.6px;font-size:19.8px;">193.2</div>
<div class="t xl1" style="left:1073.4px;width:100px;text-align:center;top:226.6px;font-size:19.8px;">193.4</div>
<div class="t xl1" style="left:1156.2px;width:100px;text-align:center;top:226.6px;font-size:19.8px;">193.6</div>
<div class="t xl1" style="left:1239.0px;width:100px;text-align:center;top:226.6px;font-size:19.8px;">193.8</div>
<div class="t xl1" style="left:1321.8px;width:100px;text-align:center;top:226.6px;font-size:19.8px;">194</div>
<div class="t xl1" style="left:1404.6px;width:100px;text-align:center;top:226.6px;font-size:19.8px;">194.2</div>
<div class="t xl1" style="left:1487.4px;width:100px;text-align:center;top:226.6px;font-size:19.8px;">194.4</div>
<div class="t xl1" style="left:1570.2px;width:100px;text-align:center;top:226.6px;font-size:19.8px;">194.6</div>
<div class="t xl1" style="left:1653.0px;width:100px;text-align:center;top:226.6px;font-size:19.8px;">194.8</div>
<div class="t xl1" style="left:1735.8px;width:100px;text-align:center;top:226.6px;font-size:19.8px;">195</div>
<div class="t" style="left:1305.95px;top:258.75px;font-size:22.5px;color:#fff;transform:scaleX(1.0585);">Frequency (MHz)</div>
<div class="t mg1" style="left:771.6px;width:200px;text-align:center;top:101.3px;font-size:23.4px;transform:rotate(-90deg);transform-origin:50% 50%;">Magnitude (dB)</div>
<div style="left:0px;top:297.3px;width:1848px;height:7.7px;background:#828282;"></div>
<div style="left:0px;top:305px;width:136px;height:58px;background:#262626;"></div>
<div style="left:136px;top:305px;width:600px;height:58px;background:#333333;"></div>
<div style="left:735.8px;top:305px;width:4.2px;height:58px;background:#f6f6f6;"></div>
<div style="left:740px;top:305px;width:1108px;height:58px;background:#262626;"></div>
<div style="left:0px;top:363px;width:1848px;height:2px;background:#f0f0f0;"></div>
<div style="left:30.8px;top:319.8px;width:90.6px;height:33.6px;border:1.2px solid #8a8a8a;border-radius:4.5px;background:#262626;"></div>
<div style="left:30.8px;top:317.8px;width:90.4px;height:45.2px;border:1.1px dotted #060606;border-bottom:none;"></div>
<div class="t" style="left:32.69px;top:325.67px;font-size:20px;color:#fff;transform:scaleX(1.0074);">7D</div>
<svg width="1848" height="936"><path d="M88.8 332.3 H103.2 L96 340.3 Z" fill="#fff"/></svg>
<div class="t" style="left:158.95px;top:325.13px;font-size:23px;color:#ffffff;transform:scaleX(0.9885);">EId: 1019</div>
<div class="t" style="left:285.66px;top:325.13px;font-size:23px;color:#ffff00;transform:scaleX(1.0284);">rbb Berlin K7D</div>
<div style="left:136.3px;top:305px;width:230.7px;height:58px;background:rgba(255,165,0,0.6);"></div>
<div style="left:136px;top:305px;width:1.2px;height:58px;background:#dcc8a8;"></div>
<div class="t" style="left:468.34px;top:325.13px;font-size:23px;color:#ffffff;transform:scaleX(1.0280);">2022-03-28&nbsp; 10:11:46 Z</div>
<div style="left:755px;top:320px;width:38px;height:33px;border:1px solid #7a7a7a;border-radius:4px;"></div>
<svg width="1848" height="936"><path d="M766.2 332 H781.4 L773.8 340.3 Z" fill="#fff"/><circle cx="845" cy="337" r="17.2" fill="#2868a0"/><circle cx="845" cy="337" r="7" fill="#ff0000"/><circle cx="897.7" cy="337" r="17.2" fill="#204c74"/><rect x="891" y="330" width="13" height="15" fill="#161616"/></svg>
<div style="left:1789.8px;top:317.8px;width:70px;height:33.4px;border:1.5px solid #8e8e8e;border-radius:4.5px;"></div>
<div class="t" style="left:1791.68px;top:323.07px;font-size:20px;color:#fff;transform:scaleX(0.9351);">DAB</div>
<svg width="1848" height="936"><path d="M1845.8 330.3 H1861 L1853.4 338.5 Z" fill="#c8c8c8"/></svg>
<div style="left:0px;top:365px;width:285.5px;height:51px;background:#0f2d4f;"></div>
<div style="left:0px;top:416px;width:285.5px;height:520px;background:#1c5a8a;"></div>
<div class="t" style="left:0.56px;top:375.40px;font-size:29.3px;color:#ffff3c;transform:scaleX(0.9854);">No Service Selected</div>
<div class="t" style="left:1.80px;top:425.68px;font-size:24px;color:#fff;transform:scaleX(0.9867);">Antenne P</div>
<div class="t" style="left:0.97px;top:463.68px;font-size:24px;color:#fff;transform:scaleX(0.9761);">Bayern 2</div>
<div class="t" style="left:1.24px;top:501.68px;font-size:24px;color:#fff;transform:scaleX(0.9396);">BR Schlager</div>
<div class="t" style="left:1.27px;top:539.68px;font-size:24px;color:#fff;transform:scaleX(0.9211);">BR-Klassik</div>
<div class="t" style="left:1.11px;top:577.68px;font-size:24px;color:#fff;transform:scaleX(1.0086);">Fritz</div>
<div class="t" style="left:0.77px;top:615.68px;font-size:24px;color:#fff;transform:scaleX(1.0471);">Inforadio</div>
<div class="t" style="left:0.97px;top:653.68px;font-size:24px;color:#fff;transform:scaleX(1.0214);">radio1</div>
<div class="t" style="left:0.98px;top:691.68px;font-size:24px;color:#fff;transform:scaleX(1.0126);">rbb 88.8</div>
<div class="t" style="left:0.92px;top:729.68px;font-size:24px;color:#fff;transform:scaleX(1.0503);">rbbKultur</div>
<div class="t" style="left:1.52px;top:767.68px;font-size:24px;color:#fff;transform:scaleX(0.9843);">SWR Aktuell</div>
<div class="t" style="left:1.59px;top:805.68px;font-size:24px;color:#fff;transform:scaleX(0.9113);">SWR3</div>
<div class="t" style="left:2.50px;top:843.68px;font-size:24px;color:#fff;transform:scaleX(0.9493);">WDR 5</div>
<div style="left:285.2px;top:365px;width:7.9px;height:571px;background:#f0f0f5;"></div>
<div style="left:293px;top:365px;width:270.5px;height:51px;background:#0f2d4f;"></div>
<div style="left:293px;top:416px;width:270.5px;height:520px;background:#1c5a8a;"></div>
<div style="left:563.4px;top:365px;width:1.4px;height:571px;background:#123a60;"></div>
<div style="left:564.7px;top:365px;width:4.6px;height:571px;background:#b6c8de;"></div>
<div class="t" style="left:300.47px;top:375.23px;font-size:29.5px;color:#fff;transform:scaleX(0.9826);">Service Quality</div>
<div class="t" style="left:307.46px;top:442.32px;font-size:20.3px;color:#fff;transform:scaleX(0.9598);">SNR (dB)</div>
<div style="left:488px;top:432.0px;width:60px;height:36.8px;background:#808080;"></div>
<div style="left:488px;top:432.0px;width:23px;height:36.8px;background:#ffa500;"></div>
<div class="t qv" style="left:488px;width:60px;text-align:center;top:443.2px;font-size:17px;">13,4</div>
<div class="t" style="left:306.71px;top:488.52px;font-size:20.3px;color:#fff;transform:scaleX(0.9776);">FIC (ok %)</div>
<div style="left:488px;top:478.1px;width:60px;height:36.8px;background:#808080;"></div>
<div style="left:488px;top:478.1px;width:59px;height:36.8px;background:#008000;"></div>
<div class="t qv" style="left:488px;width:60px;text-align:center;top:489.3px;font-size:17px;">98</div>
<div class="t" style="left:306.72px;top:534.72px;font-size:20.3px;color:#fff;transform:scaleX(0.9710);">RS (ok %)</div>
<div style="left:488px;top:524.2px;width:60px;height:36.8px;background:#808080;"></div>
<div class="t" style="left:306.58px;top:580.92px;font-size:20.3px;color:#fff;transform:scaleX(1.0561);">Null Symbol</div>
<div style="left:488px;top:570.4px;width:60px;height:36.8px;background:#808080;"></div>
<div style="left:488px;top:570.4px;width:60px;height:36.8px;background:#008000;"></div>
<div class="t" style="left:307.41px;top:627.12px;font-size:20.3px;color:#fff;transform:scaleX(1.0139);">SymbolTime (ms)</div>
<div style="left:488px;top:616.5px;width:60px;height:36.8px;background:#808080;"></div>
<div style="left:488px;top:616.5px;width:6px;height:36.8px;background:#008000;"></div>
<div class="t qv" style="left:488px;width:60px;text-align:center;top:627.7px;font-size:17px;">0,16</div>
<div class="t" style="left:306.66px;top:673.32px;font-size:20.3px;color:#fff;transform:scaleX(1.0037);">FrameTime (ms)</div>
<div style="left:488px;top:662.6px;width:60px;height:36.8px;background:#808080;"></div>
<div style="left:488px;top:662.6px;width:12px;height:36.8px;background:#008000;"></div>
<div class="t qv" style="left:488px;width:60px;text-align:center;top:673.8px;font-size:17px;">30,9</div>
<div style="left:569.3px;top:365px;width:408.7px;height:59px;background:#0f2d4f;"></div>
<div style="left:569.3px;top:416px;width:11.7px;height:10px;background:#1c5a8a;"></div>
<div style="left:569.3px;top:424px;width:408.7px;height:512px;background:#1c5a8a;"></div>
<div style="left:581px;top:416.5px;width:397px;height:7.5px;background:#0f2d4f;"></div>
<div style="left:581px;top:424px;width:397px;height:42px;background:#0f2d4f;"></div>
<div style="left:581px;top:376.3px;width:183px;height:40.2px;background:#868686;border:1px solid #9c9c9c;border-bottom:none;border-radius:6px 16px 0 0;"></div>
<div style="left:766px;top:376.3px;width:230px;height:40.2px;background:#868686;border:1px solid #9c9c9c;border-bottom:none;border-radius:6px 16px 0 0;"></div>
<div style="left:581px;top:424px;width:138px;height:42px;background:#868686;border:1px solid #9c9c9c;border-bottom:none;border-radius:6px 16px 0 0;"></div>
<div style="left:835px;top:424px;width:170px;height:42px;background:#868686;border:1px solid #9c9c9c;border-bottom:none;border-radius:6px 16px 0 0;"></div>
<div style="left:720px;top:424px;width:114px;height:43px;background:#1c5a8a;border:1px solid #5f8fb8;border-bottom:none;border-radius:6px 16px 0 0;"></div>
<div class="t" style="left:649.50px;top:386.94px;font-size:25px;color:#dedede;transform:scaleX(0.9406);">AAC</div>
<div class="t" style="left:832.52px;top:386.94px;font-size:25px;color:#dedede;transform:scaleX(1.0496);">Options</div>
<div class="t" style="left:624.44px;top:435.04px;font-size:25px;color:#dedede;transform:scaleX(0.9411);">Sync</div>
<div class="t" style="left:763.70px;top:435.04px;font-size:25px;color:#ffffff;transform:scaleX(0.9925);">TII</div>
<div class="t" style="left:880.00px;top:435.04px;font-size:25px;color:#dedede;transform:scaleX(1.0449);">Audio</div>
<div style="left:978px;top:365px;width:8.2px;height:571px;background:#f0f0f5;"></div>
<svg width="1848" height="936"><circle cx="628.2" cy="487.6" r="6.6" fill="#ff0000"/><rect x="665" y="480.5" width="13" height="14.5" fill="#0f2d4f"/><path d="M592 510 H963" stroke="#a8c0d8" stroke-width="1.6"/><path d="M592 564.4 H963" stroke="#a8c0d8" stroke-width="1.4"/></svg>
<div class="t" style="left:590.23px;top:539.12px;font-size:22.3px;color:#fff;transform:scaleX(1.0105);">Pattern</div>
<div class="t" style="left:691.12px;top:539.12px;font-size:22.3px;color:#fff;transform:scaleX(1.0695);">MainId</div>
<div class="t" style="left:791.00px;top:539.12px;font-size:22.3px;color:#fff;transform:scaleX(1.0022);">SubId</div>
<div class="t" style="left:878.48px;top:539.12px;font-size:22.3px;color:#fff;transform:scaleX(1.0191);">Strength</div>
<div class="t" style="left:593.75px;top:584.65px;font-size:20.5px;color:#fff;transform:scaleX(1.0058);">0x63</div>
<div class="t" style="left:694.45px;top:584.65px;font-size:20.5px;color:#fff;transform:scaleX(1.0476);">25</div>
<div class="t" style="left:793.31px;top:584.65px;font-size:20.5px;color:#fff;transform:scaleX(1.1947);">2</div>
<div class="t" style="left:880.96px;top:584.65px;font-size:20.5px;color:#fff;transform:scaleX(0.9915);">0.92</div>
<div class="t" style="left:593.75px;top:622.65px;font-size:20.5px;color:#fff;transform:scaleX(1.0058);">0x63</div>
<div class="t" style="left:694.45px;top:622.65px;font-size:20.5px;color:#fff;transform:scaleX(1.0476);">25</div>
<div class="t" style="left:794.20px;top:622.65px;font-size:20.5px;color:#fff;transform:scaleX(0.9333);">1</div>
<div class="t" style="left:880.96px;top:622.65px;font-size:20.5px;color:#fff;transform:scaleX(0.9850);">0.38</div>
<div style="left:986.2px;top:365px;width:862px;height:30px;background:#0f2d4f;"></div>
<div style="left:986.2px;top:395px;width:862px;height:255px;background:#000;"></div>
<div class="t" style="left:1276.52px;top:368.93px;font-size:21.7px;color:#fff;transform:scaleX(0.9872);">Channel Impulse Response (CIR)</div>
<svg width="1848" height="936"><path d="M1835.3 372.2 H1854.9 L1845.1 388.2 Z" fill="none" stroke="#e8e8e8" stroke-width="1.3"/></svg>
<div class="radio" style="left:1001.2px;top:412px;width:20px;height:20px;"></div>
<div class="t" style="left:1025.71px;top:413.46px;font-size:18px;color:#fff;transform:scaleX(0.9374);">Freeze</div>
<div class="radio" style="left:1107.8px;top:412px;width:19.6px;height:20px;"></div>
<div class="t" style="left:1132.83px;top:413.46px;font-size:18px;color:#fff;transform:scaleX(1.0000);">Gradient</div>
<div class="t" style="left:1007.95px;top:475.96px;font-size:18px;color:#fff;transform:scaleX(1.0019);">Smoothing Level</div>
<div style="left:1012px;top:503px;width:1px;height:6px;background:#c8c8c8;"></div>
<div style="left:1032px;top:504px;width:1px;height:5px;background:#c8c8c8;"></div>
<div style="left:1051px;top:504px;width:1px;height:5px;background:#c8c8c8;"></div>
<div style="left:1071px;top:504px;width:1px;height:5px;background:#c8c8c8;"></div>
<div style="left:1091px;top:504px;width:1px;height:5px;background:#c8c8c8;"></div>
<div style="left:1110px;top:504px;width:1px;height:5px;background:#c8c8c8;"></div>
<div style="left:1130px;top:504px;width:1px;height:5px;background:#c8c8c8;"></div>
<div style="left:1150px;top:504px;width:1px;height:5px;background:#c8c8c8;"></div>
<div style="left:1169px;top:504px;width:1px;height:5px;background:#c8c8c8;"></div>
<div style="left:1189px;top:504px;width:1px;height:5px;background:#c8c8c8;"></div>
<div class="track" style="left:1001px;top:517.3px;width:207px;height:3.6px;"></div>
<div class="thumb" style="left:1040.5px;top:509.5px;width:20px;height:20.5px;"></div>
<div class="t" style="left:1008.20px;top:556.76px;font-size:18px;color:#fff;transform:scaleX(0.9980);">Zoom X</div>
<div class="track" style="left:1001px;top:592.8px;width:207px;height:3.6px;"></div>
<div class="thumb" style="left:1001.5px;top:584.9px;width:20px;height:20px;"></div>
<div class="t" style="left:1008.21px;top:631.76px;font-size:18px;color:#fff;transform:scaleX(0.9826);">Zoom Y</div>
<div style="left:1217px;top:397px;width:7.2px;height:148.5px;background:#a8a8a8;border-radius:4px;"></div>
<svg width="1848" height="936"><rect x="1358" y="415.8" width="118.5" height="151.49999999999994" fill="#424242"/><path d="M1358 446.4 H1839.2 M1358 476.7 H1839.2 M1358 507.0 H1839.2 M1358 537.3 H1839.2 M1380.1 415.8 V567.3 M1412.2 415.8 V567.3 M1444.4 415.8 V567.3 M1476.5 415.8 V567.3 M1508.6 415.8 V567.3 M1540.8 415.8 V567.3 M1572.9 415.8 V567.3 M1605.1 415.8 V567.3 M1637.2 415.8 V567.3 M1669.3 415.8 V567.3 M1701.5 415.8 V567.3 M1733.6 415.8 V567.3 M1765.8 415.8 V567.3 M1797.9 415.8 V567.3 M1830.0 415.8 V567.3" stroke="#9c9c9c" stroke-opacity="0.8" stroke-width="1.05" fill="none"/><path d="M1476.5 415.8 V567.3" stroke="#f0f040" stroke-width="1.2" stroke-dasharray="1.5 1.5"/><path d="M1717.2 415.8 V567.3" stroke="#d82020" stroke-width="1.25"/><path d="M1358.8 540.9 L1359.5 550.5 L1360.2 540.3 L1361.0 547.9 L1361.7 547.6 L1362.4 540.5 L1363.1 554.8 L1363.8 542.8 L1364.6 538.8 L1365.3 551.1 L1366.0 542.3 L1366.7 546.3 L1367.4 544.5 L1368.2 555.3 L1368.9 556.5 L1369.6 548.7 L1370.3 550.5 L1371.0 547.1 L1371.8 546.7 L1372.5 548.0 L1373.2 543.8 L1373.9 542.6 L1374.6 553.6 L1375.4 550.0 L1376.1 544.5 L1376.8 546.5 L1377.5 547.7 L1378.2 549.1 L1379.0 565.5 L1379.7 555.1 L1380.4 542.0 L1381.1 545.7 L1381.8 553.9 L1382.6 554.3 L1383.3 549.1 L1384.0 552.6 L1384.7 543.8 L1385.4 559.7 L1386.2 553.2 L1386.9 541.1 L1387.6 549.0 L1388.3 552.4 L1389.0 543.1 L1389.8 550.1 L1390.5 545.6 L1391.2 545.7 L1391.9 551.7 L1392.6 552.3 L1393.4 548.9 L1394.1 556.0 L1394.8 542.5 L1395.5 542.2 L1396.2 541.1 L1397.0 548.0 L1397.7 548.4 L1398.4 557.0 L1399.1 543.5 L1399.8 544.8 L1400.6 551.5 L1401.3 549.4 L1402.0 543.9 L1402.7 544.3 L1403.4 552.3 L1404.2 542.6 L1404.9 523.2 L1405.6 544.3 L1406.3 542.4 L1407.0 539.7 L1407.8 548.5 L1408.5 547.6 L1409.2 548.5 L1409.9 547.0 L1410.6 546.6 L1411.4 552.8 L1412.1 555.1 L1412.8 541.4 L1413.5 551.9 L1414.2 544.3 L1415.0 551.4 L1415.7 542.5 L1416.4 539.5 L1417.1 543.3 L1417.8 545.1 L1418.6 545.5 L1419.3 554.2 L1420.0 540.5 L1420.7 541.5 L1421.4 538.5 L1422.2 548.3 L1422.9 547.9 L1423.6 548.9 L1424.3 538.7 L1425.0 545.1 L1425.8 549.8 L1426.5 547.5 L1427.2 541.9 L1427.9 547.8 L1428.6 553.5 L1429.4 550.8 L1430.1 538.0 L1430.8 550.1 L1431.5 560.8 L1432.2 531.2 L1433.0 557.8 L1433.7 550.7 L1434.4 553.3 L1435.1 540.4 L1435.8 551.9 L1436.6 556.6 L1437.3 527.8 L1438.0 540.5 L1438.7 541.9 L1439.4 543.0 L1440.2 541.3 L1440.9 551.4 L1441.6 557.1 L1442.3 552.6 L1443.0 531.0 L1443.8 539.2 L1444.5 540.6 L1445.2 553.1 L1445.9 542.7 L1446.6 542.2 L1447.4 555.0 L1448.1 547.6 L1448.8 541.3 L1449.5 559.1 L1450.2 554.4 L1451.0 539.1 L1451.7 549.5 L1452.4 535.8 L1453.1 541.7 L1453.8 538.3 L1454.6 548.6 L1455.3 550.1 L1456.0 538.6 L1456.7 559.9 L1457.4 536.2 L1458.2 547.2 L1458.9 540.6 L1459.6 544.0 L1460.3 547.3 L1461.0 539.6 L1461.8 548.2 L1462.5 550.2 L1463.2 540.5 L1463.9 534.5 L1464.6 542.0 L1465.4 534.4 L1466.1 537.5 L1466.8 530.6 L1467.5 536.2 L1468.2 526.2 L1469.0 536.8 L1469.7 548.0 L1470.4 530.9 L1471.1 536.4 L1471.8 533.9 L1472.6 526.5 L1473.3 518.2 L1474.0 506.9 L1474.7 494.6 L1475.4 476.6 L1476.2 458.0 L1476.9 458.0 L1477.6 467.1 L1478.3 485.0 L1479.0 497.3 L1479.8 493.3 L1480.5 520.8 L1481.2 515.1 L1481.9 522.6 L1482.6 530.6 L1483.4 523.4 L1484.1 519.2 L1484.8 521.6 L1485.5 535.9 L1486.2 533.6 L1487.0 531.5 L1487.7 539.8 L1488.4 535.1 L1489.1 533.0 L1489.8 539.0 L1490.6 544.1 L1491.3 531.3 L1492.0 541.8 L1492.7 532.6 L1493.4 532.5 L1494.2 530.1 L1494.9 531.8 L1495.6 544.5 L1496.3 528.0 L1497.0 544.0 L1497.8 538.5 L1498.5 543.7 L1499.2 544.3 L1499.9 550.5 L1500.6 547.9 L1501.4 545.8 L1502.1 539.2 L1502.8 534.9 L1503.5 550.8 L1504.2 538.6 L1505.0 538.3 L1505.7 551.4 L1506.4 536.1 L1507.1 546.1 L1507.8 553.9 L1508.6 544.8 L1509.3 544.3 L1510.0 543.7 L1510.7 538.0 L1511.4 527.9 L1512.2 547.0 L1512.9 534.2 L1513.6 546.5 L1514.3 539.5 L1515.0 550.1 L1515.8 549.4 L1516.5 537.6 L1517.2 527.1 L1517.9 543.8 L1518.6 552.7 L1519.4 539.1 L1520.1 533.8 L1520.8 551.6 L1521.5 545.7 L1522.2 534.5 L1523.0 549.6 L1523.7 559.6 L1524.4 546.4 L1525.1 543.8 L1525.8 543.6 L1526.6 549.0 L1527.3 551.4 L1528.0 548.4 L1528.7 549.5 L1529.4 549.3 L1530.2 548.7 L1530.9 548.0 L1531.6 553.3 L1532.3 536.7 L1533.0 538.6 L1533.8 543.2 L1534.5 554.0 L1535.2 539.3 L1535.9 551.1 L1536.6 543.4 L1537.4 537.8 L1538.1 543.6 L1538.8 544.4 L1539.5 551.7 L1540.2 541.1 L1541.0 546.3 L1541.7 545.9 L1542.4 544.5 L1543.1 541.8 L1543.8 552.2 L1544.6 563.1 L1545.3 545.5 L1546.0 530.1 L1546.7 548.4 L1547.4 555.0 L1548.2 542.5 L1548.9 549.5 L1549.6 538.8 L1550.3 537.7 L1551.0 547.4 L1551.8 543.0 L1552.5 540.6 L1553.2 537.3 L1553.9 551.4 L1554.6 555.8 L1555.4 543.6 L1556.1 554.7 L1556.8 539.9 L1557.5 545.3 L1558.2 555.6 L1559.0 539.8 L1559.7 539.1 L1560.4 559.8 L1561.1 540.9 L1561.8 539.9 L1562.6 539.5 L1563.3 549.0 L1564.0 550.4 L1564.7 543.4 L1565.4 551.1 L1566.2 554.1 L1566.9 538.9 L1567.6 552.2 L1568.3 538.1 L1569.0 544.2 L1569.8 549.1 L1570.5 542.8 L1571.2 544.1 L1571.9 550.4 L1572.6 554.9 L1573.4 543.6 L1574.1 553.7 L1574.8 549.7 L1575.5 548.0 L1576.2 545.7 L1577.0 544.9 L1577.7 545.4 L1578.4 542.5 L1579.1 546.2 L1579.8 541.4 L1580.6 534.9 L1581.3 541.5 L1582.0 537.1 L1582.7 551.3 L1583.4 535.8 L1584.2 555.4 L1584.9 543.5 L1585.6 551.6 L1586.3 544.2 L1587.0 549.8 L1587.8 536.2 L1588.5 544.4 L1589.2 548.0 L1589.9 528.2 L1590.6 533.0 L1591.4 540.9 L1592.1 554.3 L1592.8 544.9 L1593.5 547.0 L1594.2 550.5 L1595.0 539.0 L1595.7 551.8 L1596.4 543.9 L1597.1 553.0 L1597.8 545.8 L1598.6 550.2 L1599.3 566.5 L1600.0 551.1 L1600.7 553.8 L1601.4 536.6 L1602.2 538.1 L1602.9 546.0 L1603.6 544.5 L1604.3 549.1 L1605.0 544.9 L1605.8 550.1 L1606.5 554.1 L1607.2 562.8 L1607.9 555.1 L1608.6 558.7 L1609.4 554.4 L1610.1 548.3 L1610.8 549.4 L1611.5 552.9 L1612.2 540.5 L1613.0 548.8 L1613.7 536.8 L1614.4 555.2 L1615.1 554.7 L1615.8 544.9 L1616.6 535.3 L1617.3 556.2 L1618.0 557.6 L1618.7 554.2 L1619.4 554.8 L1620.2 555.7 L1620.9 540.8 L1621.6 537.2 L1622.3 553.1 L1623.0 544.0 L1623.8 552.1 L1624.5 543.3 L1625.2 556.8 L1625.9 541.7 L1626.6 538.4 L1627.4 542.8 L1628.1 563.9 L1628.8 538.5 L1629.5 560.5 L1630.2 541.8 L1631.0 550.9 L1631.7 556.2 L1632.4 553.7 L1633.1 549.2 L1633.8 552.8 L1634.6 546.6 L1635.3 549.2 L1636.0 547.6 L1636.7 542.5 L1637.4 551.9 L1638.2 547.2 L1638.9 547.0 L1639.6 548.4 L1640.3 547.0 L1641.0 552.6 L1641.8 554.7 L1642.5 557.4 L1643.2 539.9 L1643.9 547.2 L1644.6 542.5 L1645.4 546.9 L1646.1 535.4 L1646.8 553.5 L1647.5 554.0 L1648.2 554.3 L1649.0 549.3 L1649.7 565.2 L1650.4 551.4 L1651.1 541.7 L1651.8 557.2 L1652.6 548.8 L1653.3 551.1 L1654.0 555.2 L1654.7 543.9 L1655.4 543.5 L1656.2 557.5 L1656.9 543.3 L1657.6 547.0 L1658.3 540.7 L1659.0 550.6 L1659.8 547.1 L1660.5 550.5 L1661.2 542.9 L1661.9 546.6 L1662.6 540.0 L1663.4 547.2 L1664.1 557.3 L1664.8 547.8 L1665.5 556.5 L1666.2 549.3 L1667.0 541.7 L1667.7 556.2 L1668.4 552.8 L1669.1 543.5 L1669.8 547.8 L1670.6 544.7 L1671.3 552.2 L1672.0 544.6 L1672.7 557.0 L1673.4 548.1 L1674.2 545.5 L1674.9 550.6 L1675.6 542.0 L1676.3 549.6 L1677.0 551.2 L1677.8 547.9 L1678.5 554.8 L1679.2 543.3 L1679.9 557.7 L1680.6 553.1 L1681.4 546.3 L1682.1 550.6 L1682.8 557.8 L1683.5 551.4 L1684.2 542.1 L1685.0 551.9 L1685.7 558.5 L1686.4 539.9 L1687.1 545.4 L1687.8 560.3 L1688.6 543.8 L1689.3 537.5 L1690.0 552.9 L1690.7 545.9 L1691.4 560.9 L1692.2 549.9 L1692.9 542.6 L1693.6 550.3 L1694.3 557.0 L1695.0 539.7 L1695.8 548.5 L1696.5 560.1 L1697.2 558.3 L1697.9 556.0 L1698.6 559.4 L1699.4 543.4 L1700.1 551.9 L1700.8 543.8 L1701.5 552.4 L1702.2 555.4 L1703.0 554.5 L1703.7 551.1 L1704.4 542.1 L1705.1 544.9 L1705.8 551.6 L1706.6 548.5 L1707.3 544.7 L1708.0 547.3 L1708.7 545.7 L1709.4 554.2 L1710.2 554.4 L1710.9 556.1 L1711.6 551.4 L1712.3 567.0 L1713.0 543.8 L1713.8 553.3 L1714.5 552.0 L1715.2 547.8 L1715.9 549.4 L1716.6 546.6 L1717.4 543.0 L1718.1 559.8 L1718.8 554.1 L1719.5 554.9 L1720.2 551.7 L1721.0 550.0 L1721.7 549.2 L1722.4 551.5 L1723.1 549.4 L1723.8 542.4 L1724.6 544.3 L1725.3 545.6 L1726.0 545.6 L1726.7 537.6 L1727.4 550.1 L1728.2 546.7 L1728.9 544.7 L1729.6 546.5 L1730.3 543.2 L1731.0 567.0 L1731.8 547.6 L1732.5 541.0 L1733.2 544.5 L1733.9 543.5 L1734.6 540.9 L1735.4 547.2 L1736.1 533.3 L1736.8 546.1 L1737.5 552.1 L1738.2 555.0 L1739.0 549.5 L1739.7 537.5 L1740.4 543.7 L1741.1 548.3 L1741.8 555.9 L1742.6 549.8 L1743.3 550.6 L1744.0 556.5 L1744.7 538.4 L1745.4 539.2 L1746.2 541.2 L1746.9 544.8 L1747.6 562.5 L1748.3 552.1 L1749.0 549.9 L1749.8 538.0 L1750.5 542.1 L1751.2 547.6 L1751.9 543.6 L1752.6 541.2 L1753.4 538.9 L1754.1 549.9 L1754.8 554.9 L1755.5 555.3 L1756.2 547.7 L1757.0 552.5 L1757.7 551.8 L1758.4 552.6 L1759.1 549.4 L1759.8 548.7 L1760.6 547.6 L1761.3 543.7 L1762.0 548.3 L1762.7 554.7 L1763.4 539.2 L1764.2 567.0 L1764.9 557.8 L1765.6 547.7 L1766.3 558.2 L1767.0 538.9 L1767.8 551.8 L1768.5 554.4 L1769.2 551.1 L1769.9 554.9 L1770.6 549.5 L1771.4 554.6 L1772.1 557.0 L1772.8 547.6 L1773.5 546.3 L1774.2 549.6 L1775.0 547.8 L1775.7 549.1 L1776.4 537.3 L1777.1 556.5 L1777.8 545.8 L1778.6 550.6 L1779.3 548.9 L1780.0 549.9 L1780.7 536.8 L1781.4 551.6 L1782.2 554.4 L1782.9 541.8 L1783.6 544.1 L1784.3 548.3 L1785.0 549.6 L1785.8 554.0 L1786.5 540.5 L1787.2 547.2 L1787.9 539.1 L1788.6 556.6 L1789.4 544.9 L1790.1 549.0 L1790.8 552.6 L1791.5 551.5 L1792.2 553.7 L1793.0 550.1 L1793.7 558.7 L1794.4 552.8 L1795.1 555.4 L1795.8 555.2 L1796.6 547.3 L1797.3 558.7 L1798.0 534.2 L1798.7 548.9 L1799.4 550.4 L1800.2 561.5 L1800.9 542.4 L1801.6 555.6 L1802.3 557.1 L1803.0 542.0 L1803.8 551.1 L1804.5 543.9 L1805.2 557.6 L1805.9 557.0 L1806.6 539.7 L1807.4 556.1 L1808.1 561.6 L1808.8 546.5 L1809.5 547.3 L1810.2 556.9 L1811.0 536.8 L1811.7 538.1 L1812.4 557.6 L1813.1 544.3 L1813.8 542.7 L1814.6 551.3 L1815.3 552.3 L1816.0 536.5 L1816.7 547.0 L1817.4 549.6 L1818.2 547.8 L1818.9 552.2 L1819.6 548.5 L1820.3 547.9 L1821.0 548.2 L1821.8 545.6 L1822.5 544.1 L1823.2 538.0 L1823.9 558.8 L1824.6 549.3 L1825.4 550.2 L1826.1 551.3 L1826.8 544.0 L1827.5 537.9 L1828.2 542.0 L1829.0 554.6 L1829.7 541.9 L1830.4 555.1 L1831.1 561.0 L1831.8 535.4 L1832.6 543.7 L1833.3 558.8 L1834.0 556.1 L1834.7 550.1 L1835.4 544.6 L1836.2 553.0 L1836.9 547.8 L1837.6 556.5 L1838.3 552.8" stroke="#f4f4f4" stroke-width="1.15" fill="none" stroke-linejoin="round"/><path d="M1476.9 458 V500" stroke="#ffffff" stroke-width="1.9"/><rect x="1358" y="415.8" width="481.20000000000005" height="151.49999999999994" fill="none" stroke="#9a9a9a" stroke-width="1.3"/><circle cx="1477.0" cy="456.6" r="5.9" fill="#fff000"/></svg>
<div class="t yl2" style="left:1247.3px;width:100px;text-align:right;top:406.2px;font-size:20px;">-10.0</div>
<div class="t yl2" style="left:1247.3px;width:100px;text-align:right;top:436.5px;font-size:20px;">-20.0</div>
<div class="t yl2" style="left:1247.3px;width:100px;text-align:right;top:466.8px;font-size:20px;">-30.0</div>
<div class="t yl2" style="left:1247.3px;width:100px;text-align:right;top:497.1px;font-size:20px;">-40.0</div>
<div class="t yl2" style="left:1247.3px;width:100px;text-align:right;top:527.4px;font-size:20px;">-50.0</div>
<div class="t yl2" style="left:1247.3px;width:100px;text-align:right;top:557.7px;font-size:20px;">-60.0</div>
<div class="t xl2" style="left:1340.1px;width:80px;text-align:center;top:572.8px;font-size:15.4px;transform:scaleX(0.93);transform-origin:50% 50%;">-60</div>
<div class="t xl2" style="left:1372.2px;width:80px;text-align:center;top:594.0px;font-size:15.4px;transform:scaleX(0.93);transform-origin:50% 50%;">-40</div>
<div class="t xl2" style="left:1404.4px;width:80px;text-align:center;top:572.8px;font-size:15.4px;transform:scaleX(0.93);transform-origin:50% 50%;">-20</div>
<div class="t xl2" style="left:1436.5px;width:80px;text-align:center;top:594.0px;font-size:15.4px;transform:scaleX(0.93);transform-origin:50% 50%;">0</div>
<div class="t xl2" style="left:1468.6px;width:80px;text-align:center;top:572.8px;font-size:15.4px;transform:scaleX(0.93);transform-origin:50% 50%;">20</div>
<div class="t xl2" style="left:1500.8px;width:80px;text-align:center;top:594.0px;font-size:15.4px;transform:scaleX(0.93);transform-origin:50% 50%;">40</div>
<div class="t xl2" style="left:1532.9px;width:80px;text-align:center;top:572.8px;font-size:15.4px;transform:scaleX(0.93);transform-origin:50% 50%;">60</div>
<div class="t xl2" style="left:1565.1px;width:80px;text-align:center;top:594.0px;font-size:15.4px;transform:scaleX(0.93);transform-origin:50% 50%;">80</div>
<div class="t xl2" style="left:1597.2px;width:80px;text-align:center;top:572.8px;font-size:15.4px;transform:scaleX(0.93);transform-origin:50% 50%;">100</div>
<div class="t xl2" style="left:1629.3px;width:80px;text-align:center;top:594.0px;font-size:15.4px;transform:scaleX(0.93);transform-origin:50% 50%;">120</div>
<div class="t xl2" style="left:1661.5px;width:80px;text-align:center;top:572.8px;font-size:15.4px;transform:scaleX(0.93);transform-origin:50% 50%;">140</div>
<div class="t xl2" style="left:1693.6px;width:80px;text-align:center;top:594.0px;font-size:15.4px;transform:scaleX(0.93);transform-origin:50% 50%;">160</div>
<div class="t xl2" style="left:1725.8px;width:80px;text-align:center;top:572.8px;font-size:15.4px;transform:scaleX(0.93);transform-origin:50% 50%;">180</div>
<div class="t xl2" style="left:1757.9px;width:80px;text-align:center;top:594.0px;font-size:15.4px;transform:scaleX(0.93);transform-origin:50% 50%;">200</div>
<div class="t xl2" style="left:1790.0px;width:80px;text-align:center;top:572.8px;font-size:15.4px;transform:scaleX(0.93);transform-origin:50% 50%;">220</div>
<div class="t" style="left:1487.38px;top:617.82px;font-size:20.3px;color:#fff;transform:scaleX(0.9933);">Distance Difference (km)</div>
<div class="t mg2" style="left:1171.6px;width:200px;text-align:center;top:482.2px;font-size:20px;transform:rotate(-90deg);transform-origin:50% 50%;">Magnitude (dB)</div>
<div style="left:986.2px;top:650.2px;width:862px;height:7.8px;background:#828282;"></div>
<div style="left:986.2px;top:658px;width:862px;height:29px;background:#0f2d4f;"></div>
<div style="left:986.2px;top:687px;width:862px;height:249px;background:#000;"></div>
<div class="t" style="left:1384.64px;top:661.43px;font-size:21.7px;color:#fff;transform:scaleX(0.9648);">TII Carriers</div>
<svg width="1848" height="936"><path d="M1835.3 664.9 H1854.9 L1845.1 680.9 Z" fill="none" stroke="#e8e8e8" stroke-width="1.3"/></svg>
<svg width="1848" height="936"><path d="M1101.2 741.8 H1831.7 M1101.2 775.3 H1831.7 M1101.2 808.9 H1831.7 M1101.2 842.4 H1831.7 M1145.5 707.7 V875.3 M1216.8 707.7 V875.3 M1288.2 707.7 V875.3 M1359.6 707.7 V875.3 M1430.9 707.7 V875.3 M1502.3 707.7 V875.3 M1573.6 707.7 V875.3 M1645.0 707.7 V875.3 M1716.4 707.7 V875.3 M1787.7 707.7 V875.3" stroke="#8e8e8e" stroke-opacity="0.9" stroke-width="1.05" fill="none"/><rect x="1101.2" y="868.2" width="730.5" height="7.1" fill="#5a5a5a" fill-opacity="0.9"/><path d="M1101.2 873.3 H1192.6 M1740.6 873.3 H1831.7" stroke="#8a8a8a" stroke-width="1"/><path d="M1192.6 710.2 V875.3" stroke="#e8e81c" stroke-width="2" stroke-dasharray="1.9 2.2"/><path d="M1329.6 710.2 V875.3" stroke="#e8e81c" stroke-width="2" stroke-dasharray="1.9 2.2"/><path d="M1466.6 710.2 V875.3" stroke="#e8e81c" stroke-width="2" stroke-dasharray="1.9 2.2"/><path d="M1603.6 710.2 V875.3" stroke="#e8e81c" stroke-width="2" stroke-dasharray="1.9 2.2"/><path d="M1740.6 710.2 V875.3" stroke="#e8e81c" stroke-width="2" stroke-dasharray="1.9 2.2"/><path d="M1196.9 875.3 v-6.9 M1198.3 875.3 v-2.1 M1199.0 875.3 v-8.2 M1199.7 875.3 v-1.7 M1201.1 875.3 v-1.2 M1201.9 875.3 v-9.5 M1202.6 875.3 v-2.4 M1203.3 875.3 v-8.0 M1204.0 875.3 v-1.6 M1206.8 875.3 v-2.4 M1207.6 875.3 v-1.4 M1208.3 875.3 v-7.9 M1209.0 875.3 v-2.6 M1209.7 875.3 v-5.3 M1211.1 875.3 v-1.4 M1212.6 875.3 v-0.9 M1213.3 875.3 v-5.0 M1214.7 875.3 v-1.0 M1216.8 875.3 v-2.7 M1217.6 875.3 v-3.3 M1219.7 875.3 v-1.9 M1220.4 875.3 v-1.2 M1221.1 875.3 v-3.7 M1221.8 875.3 v-2.3 M1222.5 875.3 v-3.2 M1223.3 875.3 v-11.9 M1224.0 875.3 v-2.4 M1225.4 875.3 v-1.9 M1226.1 875.3 v-1.4 M1227.5 875.3 v-1.1 M1230.4 875.3 v-2.2 M1231.1 875.3 v-1.4 M1234.0 875.3 v-5.0 M1234.7 875.3 v-1.1 M1235.4 875.3 v-6.4 M1236.8 875.3 v-6.2 M1237.5 875.3 v-1.4 M1238.2 875.3 v-5.3 M1241.8 875.3 v-1.4 M1244.0 875.3 v-2.8 M1245.4 875.3 v-4.1 M1246.8 875.3 v-1.0 M1249.0 875.3 v-3.4 M1249.7 875.3 v-4.1 M1253.2 875.3 v-2.3 M1254.7 875.3 v-1.1 M1256.8 875.3 v-1.5 M1257.5 875.3 v-4.2 M1260.4 875.3 v-2.3 M1261.1 875.3 v-3.2 M1262.5 875.3 v-6.3 M1263.2 875.3 v-1.1 M1263.9 875.3 v-3.6 M1264.7 875.3 v-1.4 M1265.4 875.3 v-0.9 M1266.1 875.3 v-0.9 M1266.8 875.3 v-8.1 M1267.5 875.3 v-3.0 M1268.2 875.3 v-6.5 M1268.9 875.3 v-4.0 M1270.4 875.3 v-3.0 M1272.5 875.3 v-3.5 M1273.9 875.3 v-3.4 M1274.6 875.3 v-2.9 M1276.1 875.3 v-2.5 M1277.5 875.3 v-1.6 M1278.9 875.3 v-1.3 M1279.6 875.3 v-8.1 M1281.1 875.3 v-1.5 M1282.5 875.3 v-3.7 M1284.6 875.3 v-2.8 M1286.1 875.3 v-1.2 M1286.8 875.3 v-3.0 M1287.5 875.3 v-1.0 M1288.2 875.3 v-0.9 M1288.9 875.3 v-2.1 M1289.6 875.3 v-1.7 M1290.3 875.3 v-3.9 M1291.1 875.3 v-2.7 M1293.2 875.3 v-8.1 M1293.9 875.3 v-4.4 M1294.6 875.3 v-2.7 M1295.3 875.3 v-4.8 M1296.0 875.3 v-4.0 M1296.8 875.3 v-2.9 M1297.5 875.3 v-4.2 M1298.9 875.3 v-4.1 M1299.6 875.3 v-1.2 M1300.3 875.3 v-1.2 M1303.2 875.3 v-1.7 M1306.0 875.3 v-1.8 M1308.2 875.3 v-2.3 M1309.6 875.3 v-2.9 M1311.0 875.3 v-2.5 M1311.7 875.3 v-1.6 M1313.9 875.3 v-1.2 M1314.6 875.3 v-3.2 M1315.3 875.3 v-9.1 M1316.0 875.3 v-2.9 M1316.7 875.3 v-3.1 M1317.5 875.3 v-2.7 M1318.2 875.3 v-1.4 M1318.9 875.3 v-3.7 M1321.0 875.3 v-3.9 M1321.7 875.3 v-3.3 M1323.2 875.3 v-3.3 M1324.6 875.3 v-0.9 M1326.7 875.3 v-1.7 M1329.6 875.3 v-2.5 M1330.3 875.3 v-2.5 M1331.0 875.3 v-1.9 M1333.2 875.3 v-1.7 M1333.9 875.3 v-3.6 M1334.6 875.3 v-5.8 M1335.3 875.3 v-6.1 M1336.7 875.3 v-2.1 M1338.2 875.3 v-7.2 M1338.9 875.3 v-2.1 M1339.6 875.3 v-1.9 M1340.3 875.3 v-1.8 M1341.0 875.3 v-8.7 M1341.7 875.3 v-3.8 M1343.9 875.3 v-2.0 M1344.6 875.3 v-1.2 M1346.0 875.3 v-1.0 M1346.7 875.3 v-1.4 M1348.1 875.3 v-1.9 M1350.3 875.3 v-3.5 M1353.1 875.3 v-8.0 M1353.9 875.3 v-6.6 M1355.3 875.3 v-9.0 M1356.0 875.3 v-1.7 M1356.7 875.3 v-0.8 M1357.4 875.3 v-1.6 M1358.1 875.3 v-8.9 M1358.8 875.3 v-1.6 M1359.6 875.3 v-1.9 M1360.3 875.3 v-1.0 M1361.7 875.3 v-7.6 M1362.4 875.3 v-2.2 M1363.1 875.3 v-3.8 M1363.8 875.3 v-3.8 M1365.3 875.3 v-9.3 M1366.7 875.3 v-2.3 M1367.4 875.3 v-0.8 M1368.1 875.3 v-1.9 M1368.8 875.3 v-1.0 M1369.6 875.3 v-1.6 M1370.3 875.3 v-2.8 M1371.0 875.3 v-1.9 M1373.1 875.3 v-5.3 M1376.0 875.3 v-2.5 M1376.7 875.3 v-1.5 M1377.4 875.3 v-1.5 M1378.1 875.3 v-4.9 M1378.8 875.3 v-6.2 M1379.5 875.3 v-4.8 M1380.3 875.3 v-5.7 M1381.0 875.3 v-1.0 M1383.1 875.3 v-1.2 M1383.8 875.3 v-1.5 M1385.2 875.3 v-3.5 M1386.7 875.3 v-3.4 M1388.1 875.3 v-1.9 M1388.8 875.3 v-4.6 M1389.5 875.3 v-3.7 M1390.2 875.3 v-3.4 M1391.0 875.3 v-2.2 M1391.7 875.3 v-1.8 M1393.1 875.3 v-4.0 M1393.8 875.3 v-5.7 M1394.5 875.3 v-1.3 M1395.2 875.3 v-6.1 M1396.0 875.3 v-3.4 M1397.4 875.3 v-1.5 M1400.2 875.3 v-8.6 M1400.9 875.3 v-1.8 M1401.7 875.3 v-3.2 M1402.4 875.3 v-4.8 M1406.7 875.3 v-1.4 M1407.4 875.3 v-4.1 M1408.1 875.3 v-6.4 M1408.8 875.3 v-4.6 M1409.5 875.3 v-2.9 M1410.2 875.3 v-1.0 M1415.2 875.3 v-1.8 M1415.9 875.3 v-2.3 M1416.6 875.3 v-2.0 M1417.4 875.3 v-2.1 M1419.5 875.3 v-1.8 M1420.2 875.3 v-2.0 M1420.9 875.3 v-3.9 M1421.6 875.3 v-1.5 M1423.1 875.3 v-2.7 M1424.5 875.3 v-3.9 M1426.6 875.3 v-2.1 M1427.4 875.3 v-2.6 M1428.1 875.3 v-2.0 M1428.8 875.3 v-2.1 M1429.5 875.3 v-1.0 M1430.2 875.3 v-3.9 M1431.6 875.3 v-2.9 M1433.8 875.3 v-3.0 M1434.5 875.3 v-3.8 M1435.9 875.3 v-2.2 M1436.6 875.3 v-1.8 M1437.3 875.3 v-4.3 M1443.1 875.3 v-3.5 M1443.8 875.3 v-1.5 M1445.9 875.3 v-3.2 M1446.6 875.3 v-1.7 M1447.3 875.3 v-1.7 M1448.0 875.3 v-13.7 M1449.5 875.3 v-2.3 M1450.2 875.3 v-3.4 M1450.9 875.3 v-4.2 M1451.6 875.3 v-2.3 M1452.3 875.3 v-5.1 M1453.8 875.3 v-3.4 M1455.2 875.3 v-1.6 M1455.9 875.3 v-8.2 M1456.6 875.3 v-1.9 M1457.3 875.3 v-10.6 M1458.0 875.3 v-8.8 M1458.8 875.3 v-7.2 M1460.2 875.3 v-2.9 M1460.9 875.3 v-2.0 M1461.6 875.3 v-12.1 M1463.0 875.3 v-5.5 M1464.5 875.3 v-10.8 M1465.2 875.3 v-4.2 M1465.9 875.3 v-4.3 M1468.7 875.3 v-1.3 M1470.2 875.3 v-3.5 M1470.9 875.3 v-2.9 M1471.6 875.3 v-1.2 M1472.3 875.3 v-3.1 M1473.7 875.3 v-9.1 M1475.2 875.3 v-2.1 M1476.6 875.3 v-2.2 M1477.3 875.3 v-1.3 M1478.7 875.3 v-5.1 M1480.9 875.3 v-3.7 M1481.6 875.3 v-3.2 M1482.3 875.3 v-2.7 M1483.0 875.3 v-1.2 M1484.4 875.3 v-11.7 M1485.2 875.3 v-1.3 M1485.9 875.3 v-1.0 M1486.6 875.3 v-1.7 M1487.3 875.3 v-3.0 M1489.4 875.3 v-1.1 M1493.0 875.3 v-9.1 M1494.4 875.3 v-6.0 M1495.9 875.3 v-5.4 M1496.6 875.3 v-2.4 M1497.3 875.3 v-5.0 M1498.0 875.3 v-3.6 M1499.4 875.3 v-1.5 M1500.1 875.3 v-5.3 M1501.6 875.3 v-2.1 M1503.0 875.3 v-2.2 M1503.7 875.3 v-1.4 M1504.4 875.3 v-4.7 M1505.8 875.3 v-1.3 M1506.6 875.3 v-1.3 M1507.3 875.3 v-2.2 M1508.0 875.3 v-8.4 M1508.7 875.3 v-3.4 M1510.8 875.3 v-2.0 M1512.3 875.3 v-0.9 M1513.0 875.3 v-2.8 M1513.7 875.3 v-3.2 M1514.4 875.3 v-2.5 M1515.8 875.3 v-8.0 M1518.0 875.3 v-2.1 M1518.7 875.3 v-1.9 M1520.1 875.3 v-3.4 M1520.8 875.3 v-6.2 M1522.3 875.3 v-2.1 M1523.7 875.3 v-2.4 M1525.1 875.3 v-2.1 M1527.3 875.3 v-1.1 M1529.4 875.3 v-11.0 M1530.1 875.3 v-3.5 M1530.8 875.3 v-4.0 M1531.5 875.3 v-4.6 M1533.0 875.3 v-2.4 M1533.7 875.3 v-5.1 M1534.4 875.3 v-2.4 M1535.1 875.3 v-0.9 M1535.8 875.3 v-1.4 M1536.5 875.3 v-6.5 M1537.2 875.3 v-3.4 M1538.0 875.3 v-1.9 M1538.7 875.3 v-1.1 M1539.4 875.3 v-7.4 M1540.1 875.3 v-3.0 M1541.5 875.3 v-4.7 M1543.0 875.3 v-5.1 M1543.7 875.3 v-3.5 M1545.1 875.3 v-1.9 M1545.8 875.3 v-0.9 M1547.2 875.3 v-2.8 M1548.0 875.3 v-2.2 M1549.4 875.3 v-4.8 M1550.1 875.3 v-4.2 M1550.8 875.3 v-2.0 M1551.5 875.3 v-2.5 M1552.2 875.3 v-1.8 M1552.9 875.3 v-1.0 M1554.4 875.3 v-3.1 M1555.8 875.3 v-3.5 M1556.5 875.3 v-5.4 M1557.9 875.3 v-3.3 M1558.7 875.3 v-4.4 M1559.4 875.3 v-3.1 M1561.5 875.3 v-3.9 M1562.2 875.3 v-1.7 M1562.9 875.3 v-4.3 M1563.6 875.3 v-1.9 M1564.4 875.3 v-5.1 M1565.1 875.3 v-2.1 M1566.5 875.3 v-2.0 M1567.9 875.3 v-2.0 M1568.6 875.3 v-2.3 M1569.4 875.3 v-0.9 M1570.1 875.3 v-3.9 M1570.8 875.3 v-4.4 M1572.2 875.3 v-3.3 M1573.6 875.3 v-1.2 M1574.4 875.3 v-1.0 M1575.1 875.3 v-1.8 M1575.8 875.3 v-3.6 M1578.6 875.3 v-1.9 M1579.3 875.3 v-5.8 M1580.8 875.3 v-3.0 M1581.5 875.3 v-5.9 M1582.2 875.3 v-2.8 M1582.9 875.3 v-1.8 M1585.8 875.3 v-3.1 M1586.5 875.3 v-2.4 M1592.9 875.3 v-2.8 M1594.3 875.3 v-4.0 M1595.0 875.3 v-0.8 M1595.8 875.3 v-4.7 M1597.2 875.3 v-3.7 M1597.9 875.3 v-2.8 M1598.6 875.3 v-2.4 M1599.3 875.3 v-3.0 M1601.5 875.3 v-1.7 M1602.2 875.3 v-7.3 M1603.6 875.3 v-1.7 M1604.3 875.3 v-3.5 M1605.0 875.3 v-3.3 M1605.8 875.3 v-2.0 M1607.2 875.3 v-2.6 M1607.9 875.3 v-7.9 M1608.6 875.3 v-3.0 M1609.3 875.3 v-5.4 M1610.0 875.3 v-1.9 M1612.2 875.3 v-0.9 M1612.9 875.3 v-2.2 M1613.6 875.3 v-7.7 M1614.3 875.3 v-1.1 M1615.7 875.3 v-6.6 M1617.2 875.3 v-1.8 M1617.9 875.3 v-9.6 M1618.6 875.3 v-1.9 M1619.3 875.3 v-3.4 M1620.0 875.3 v-1.2 M1620.7 875.3 v-5.6 M1622.2 875.3 v-4.4 M1622.9 875.3 v-1.9 M1623.6 875.3 v-5.8 M1624.3 875.3 v-2.8 M1625.0 875.3 v-2.1 M1625.7 875.3 v-3.3 M1627.9 875.3 v-4.0 M1629.3 875.3 v-2.6 M1630.0 875.3 v-2.8 M1632.2 875.3 v-4.3 M1632.9 875.3 v-3.1 M1633.6 875.3 v-1.2 M1634.3 875.3 v-2.1 M1635.0 875.3 v-6.9 M1636.4 875.3 v-0.9 M1637.2 875.3 v-5.0 M1637.9 875.3 v-3.2 M1638.6 875.3 v-1.9 M1639.3 875.3 v-9.9 M1640.7 875.3 v-1.4 M1641.4 875.3 v-6.4 M1642.1 875.3 v-0.9 M1642.9 875.3 v-9.5 M1643.6 875.3 v-6.0 M1644.3 875.3 v-2.1 M1645.0 875.3 v-8.5 M1645.7 875.3 v-2.0 M1646.4 875.3 v-2.0 M1647.1 875.3 v-7.4 M1650.0 875.3 v-6.2 M1650.7 875.3 v-2.3 M1651.4 875.3 v-6.0 M1655.7 875.3 v-3.3 M1656.4 875.3 v-3.1 M1657.1 875.3 v-1.6 M1657.8 875.3 v-1.5 M1658.6 875.3 v-3.0 M1659.3 875.3 v-4.5 M1660.0 875.3 v-4.2 M1660.7 875.3 v-4.6 M1661.4 875.3 v-6.9 M1662.1 875.3 v-1.7 M1663.6 875.3 v-1.6 M1665.0 875.3 v-4.9 M1667.1 875.3 v-3.3 M1667.8 875.3 v-3.4 M1668.5 875.3 v-1.9 M1669.3 875.3 v-1.1 M1670.0 875.3 v-2.0 M1670.7 875.3 v-2.7 M1671.4 875.3 v-1.3 M1672.8 875.3 v-3.7 M1673.5 875.3 v-1.2 M1674.3 875.3 v-1.9 M1675.0 875.3 v-2.8 M1675.7 875.3 v-1.2 M1676.4 875.3 v-3.2 M1677.1 875.3 v-4.0 M1677.8 875.3 v-3.0 M1678.5 875.3 v-2.5 M1679.3 875.3 v-2.9 M1680.0 875.3 v-4.4 M1681.4 875.3 v-3.8 M1682.1 875.3 v-1.6 M1682.8 875.3 v-3.5 M1686.4 875.3 v-3.2 M1687.8 875.3 v-0.9 M1688.5 875.3 v-2.7 M1690.0 875.3 v-3.4 M1691.4 875.3 v-1.8 M1692.8 875.3 v-1.4 M1695.0 875.3 v-4.5 M1695.7 875.3 v-2.9 M1697.1 875.3 v-7.0 M1699.9 875.3 v-1.2 M1703.5 875.3 v-4.0 M1704.9 875.3 v-7.1 M1705.7 875.3 v-6.7 M1707.1 875.3 v-2.2 M1708.5 875.3 v-5.3 M1709.2 875.3 v-1.8 M1709.9 875.3 v-2.6 M1710.7 875.3 v-2.6 M1711.4 875.3 v-4.9 M1712.1 875.3 v-2.8 M1712.8 875.3 v-3.0 M1713.5 875.3 v-1.1 M1714.9 875.3 v-2.0 M1715.6 875.3 v-1.5 M1716.4 875.3 v-5.4 M1719.9 875.3 v-1.8 M1721.4 875.3 v-3.5 M1722.1 875.3 v-1.2 M1722.8 875.3 v-1.8 M1723.5 875.3 v-3.6 M1724.9 875.3 v-1.8 M1725.6 875.3 v-1.5 M1726.4 875.3 v-9.6 M1727.8 875.3 v-5.4 M1728.5 875.3 v-8.3 M1729.2 875.3 v-1.0 M1729.9 875.3 v-3.0 M1730.6 875.3 v-1.8 M1731.3 875.3 v-1.3 M1732.8 875.3 v-5.5 M1733.5 875.3 v-4.7 M1734.9 875.3 v-6.9 M1735.6 875.3 v-2.6 M1737.8 875.3 v-1.1 M1739.2 875.3 v-2.2 M1739.9 875.3 v-3.1" stroke="#9e9e9e" stroke-width="1" fill="none"/><path d="M1210.4 875.3 L1211.2 707.7 L1212.2 707.7 L1213.0 875.3 Z" fill="#bfe2c2"/><path d="M1211.7 791.5 V707.7" stroke="#f4fbf4" stroke-width="0.9"/><path d="M1227.9 875.3 L1228.8 716.9 L1229.7 716.9 L1230.5 875.3 Z" fill="#bfe2c2"/><path d="M1229.2 796.1 V716.9" stroke="#f4fbf4" stroke-width="0.9"/><path d="M1295.7 875.3 L1296.5 731.2 L1297.5 731.2 L1298.3 875.3 Z" fill="#bfe2c2"/><path d="M1297.0 803.2 V731.2" stroke="#f4fbf4" stroke-width="0.9"/><path d="M1313.2 875.3 L1314.0 745.4 L1315.0 745.4 L1315.8 875.3 Z" fill="#bfe2c2"/><path d="M1314.5 810.4 V745.4" stroke="#f4fbf4" stroke-width="0.9"/><path d="M1347.4 875.3 L1348.2 742.9 L1349.2 742.9 L1350.0 875.3 Z" fill="#bfe2c2"/><path d="M1348.7 809.1 V742.9" stroke="#f4fbf4" stroke-width="0.9"/><path d="M1364.4 875.3 L1365.2 739.5 L1366.2 739.5 L1367.0 875.3 Z" fill="#bfe2c2"/><path d="M1365.7 807.4 V739.5" stroke="#f4fbf4" stroke-width="0.9"/><path d="M1432.9 875.3 L1433.8 726.8 L1434.7 726.8 L1435.5 875.3 Z" fill="#bfe2c2"/><path d="M1434.2 801.1 V726.8" stroke="#f4fbf4" stroke-width="0.9"/><path d="M1449.7 875.3 L1450.5 713.7 L1451.5 713.7 L1452.3 875.3 Z" fill="#bfe2c2"/><path d="M1451.0 794.5 V713.7" stroke="#f4fbf4" stroke-width="0.9"/><path d="M1484.7 875.3 L1485.5 716.8 L1486.5 716.8 L1487.3 875.3 Z" fill="#bfe2c2"/><path d="M1486.0 796.0 V716.8" stroke="#f4fbf4" stroke-width="0.9"/><path d="M1501.7 875.3 L1502.5 724.8 L1503.5 724.8 L1504.3 875.3 Z" fill="#bfe2c2"/><path d="M1503.0 800.0 V724.8" stroke="#f4fbf4" stroke-width="0.9"/><path d="M1570.2 875.3 L1571.0 746.2 L1572.0 746.2 L1572.8 875.3 Z" fill="#bfe2c2"/><path d="M1571.5 810.8 V746.2" stroke="#f4fbf4" stroke-width="0.9"/><path d="M1587.2 875.3 L1588.0 754.6 L1589.0 754.6 L1589.8 875.3 Z" fill="#bfe2c2"/><path d="M1588.5 815.0 V754.6" stroke="#f4fbf4" stroke-width="0.9"/><path d="M1621.4 875.3 L1622.2 761.3 L1623.2 761.3 L1624.0 875.3 Z" fill="#bfe2c2"/><path d="M1622.7 818.3 V761.3" stroke="#f4fbf4" stroke-width="0.9"/><path d="M1638.4 875.3 L1639.2 749.3 L1640.2 749.3 L1641.0 875.3 Z" fill="#bfe2c2"/><path d="M1639.7 812.3 V749.3" stroke="#f4fbf4" stroke-width="0.9"/><path d="M1707.2 875.3 L1708.0 782.4 L1709.0 782.4 L1709.8 875.3 Z" fill="#bfe2c2"/><path d="M1708.5 828.9 V782.4" stroke="#f4fbf4" stroke-width="0.9"/><path d="M1723.9 875.3 L1724.8 804.9 L1725.7 804.9 L1726.5 875.3 Z" fill="#bfe2c2"/><path d="M1725.2 840.1 V804.9" stroke="#f4fbf4" stroke-width="0.9"/><path d="M1512.2 875.3 V850.2" stroke="#b4bcb4" stroke-width="1.2"/><path d="M1472.7 875.3 V856.9" stroke="#b4bcb4" stroke-width="1.2"/><path d="M1463.5 875.3 V860.2" stroke="#b4bcb4" stroke-width="1.2"/><path d="M1311.3 875.3 V861.1" stroke="#b4bcb4" stroke-width="1.2"/><path d="M1217.5 875.3 V863.6" stroke="#b4bcb4" stroke-width="1.2"/><path d="M1392.0 875.3 V865.2" stroke="#b4bcb4" stroke-width="1.2"/><path d="M1538.5 875.3 V865.2" stroke="#b4bcb4" stroke-width="1.2"/><path d="M1649.0 875.3 V866.9" stroke="#b4bcb4" stroke-width="1.2"/><rect x="1101.2" y="707.7" width="730.5" height="167.5999999999999" fill="none" stroke="#9a9a9a" stroke-width="1.3"/><path d="M1101.2 707.7 V875.3" stroke="#e04040" stroke-width="1.6"/></svg>
<div class="t yl3" style="left:987.6px;width:100px;text-align:right;top:698.8px;font-size:19.9px;">1.0</div>
<div class="t yl3" style="left:987.6px;width:100px;text-align:right;top:732.3px;font-size:19.9px;">0.8</div>
<div class="t yl3" style="left:987.6px;width:100px;text-align:right;top:765.8px;font-size:19.9px;">0.6</div>
<div class="t yl3" style="left:987.6px;width:100px;text-align:right;top:799.4px;font-size:19.9px;">0.4</div>
<div class="t yl3" style="left:987.6px;width:100px;text-align:right;top:832.9px;font-size:19.9px;">0.2</div>
<div class="t yl3" style="left:987.6px;width:100px;text-align:right;top:866.4px;font-size:19.9px;">0.0</div>
<div class="t xl3" style="left:1104.5px;width:80px;text-align:center;top:881.7px;font-size:19.6px;">-900</div>
<div class="t xl3" style="left:1175.8px;width:80px;text-align:center;top:881.7px;font-size:19.6px;">-700</div>
<div class="t xl3" style="left:1247.2px;width:80px;text-align:center;top:881.7px;font-size:19.6px;">-500</div>
<div class="t xl3" style="left:1318.6px;width:80px;text-align:center;top:881.7px;font-size:19.6px;">-300</div>
<div class="t xl3" style="left:1389.9px;width:80px;text-align:center;top:881.7px;font-size:19.6px;">-100</div>
<div class="t xl3" style="left:1461.7px;width:80px;text-align:center;top:881.7px;font-size:19.6px;">100</div>
<div class="t xl3" style="left:1533.0px;width:80px;text-align:center;top:881.7px;font-size:19.6px;">300</div>
<div class="t xl3" style="left:1604.4px;width:80px;text-align:center;top:881.7px;font-size:19.6px;">500</div>
<div class="t xl3" style="left:1675.8px;width:80px;text-align:center;top:881.7px;font-size:19.6px;">700</div>
<div class="t xl3" style="left:1747.1px;width:80px;text-align:center;top:881.7px;font-size:19.6px;">900</div>
<div class="t" style="left:1405.62px;top:909.27px;font-size:20px;color:#fff;transform:scaleX(1.0017);">TII Subcarrier</div>
<div class="t mg3" style="left:932px;width:200px;text-align:center;top:781.6px;font-size:20px;transform:rotate(-90deg);transform-origin:50% 50%;">Magnitude</div>
</body></html>
